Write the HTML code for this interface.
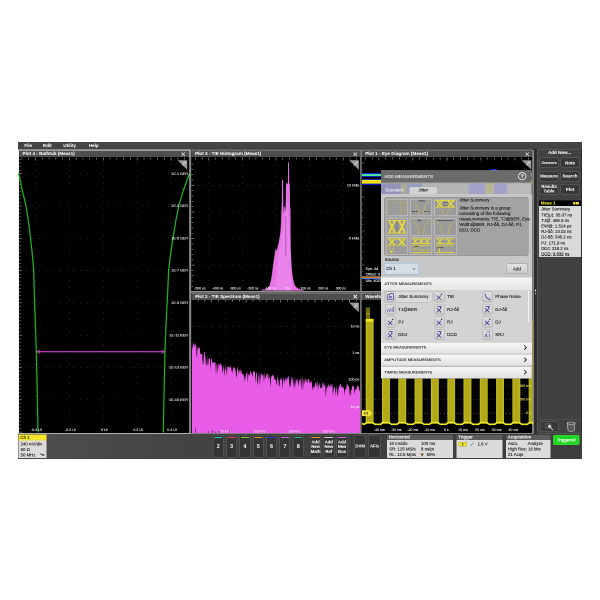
<!DOCTYPE html>
<html><head><meta charset="utf-8"><title>Scope</title>
<style>
html,body{margin:0;padding:0;background:#fff;}
body{width:600px;height:600px;position:relative;overflow:hidden;font-family:"Liberation Sans",sans-serif;}
.a{position:absolute;box-sizing:border-box;}
.t{position:absolute;white-space:nowrap;line-height:1.16;-webkit-text-stroke:0.08px currentColor;}
svg{overflow:visible}
svg text{font-family:"Liberation Sans",sans-serif;}
#root{position:absolute;left:0;top:0;width:600px;height:600px;zoom:2;transform:scale(0.5);transform-origin:0 0;will-change:transform;}
</style></head><body><div id="root">
<div class="a" style="left:18.00px;top:142.00px;width:564.00px;height:316.60px;background:#3f3f3f;"></div>
<div class="a" style="left:18.00px;top:142.00px;width:564.00px;height:8.00px;background:#444;"></div>
<div class="a" style="left:18.00px;top:149.00px;width:564.00px;height:1.00px;background:#262626;"></div>
<div class="t" style="left:24.20px;top:142.93px;font-size:4.6px;color:#f2f2f2;font-weight:bold;">File</div>
<div class="t" style="left:43.00px;top:142.93px;font-size:4.6px;color:#f2f2f2;font-weight:bold;">Edit</div>
<div class="t" style="left:63.30px;top:142.93px;font-size:4.6px;color:#f2f2f2;font-weight:bold;">Utility</div>
<div class="t" style="left:88.70px;top:142.93px;font-size:4.6px;color:#f2f2f2;font-weight:bold;">Help</div>
<div class="a" style="left:18.00px;top:149.60px;width:172.40px;height:284.40px;background:#000;border:1.2px solid #ececec;"></div>
<div class="a" style="left:19.00px;top:150.60px;width:170.40px;height:6.40px;background:#4e4e4e;"></div>
<div class="t" style="left:22.50px;top:151.13px;font-size:4.6px;color:#f4f4f4;font-weight:bold;">Plot 4 - Bathtub (Meas1)</div>
<div class="a" style="left:190.60px;top:149.60px;width:170.40px;height:142.40px;background:#000;border-top:1px solid #8c8c8c;border-bottom:1px solid #8c8c8c;border-left:1px solid #2a2a2a;border-right:1px solid #2a2a2a;"></div>
<div class="a" style="left:191.60px;top:150.60px;width:168.40px;height:6.40px;background:#4e4e4e;"></div>
<div class="t" style="left:195.10px;top:151.13px;font-size:4.6px;color:#f4f4f4;font-weight:bold;">Plot 3 - TIE Histogram (Meas1)</div>
<div class="a" style="left:190.60px;top:292.40px;width:170.40px;height:141.60px;background:#000;border-top:1px solid #8c8c8c;border-bottom:1px solid #8c8c8c;border-left:1px solid #2a2a2a;border-right:1px solid #2a2a2a;"></div>
<div class="a" style="left:191.60px;top:293.40px;width:168.40px;height:6.40px;background:#4e4e4e;"></div>
<div class="t" style="left:195.10px;top:293.93px;font-size:4.6px;color:#f4f4f4;font-weight:bold;">Plot 2 - TIE Spectrum (Meas1)</div>
<div class="a" style="left:360.70px;top:149.60px;width:172.20px;height:142.40px;background:#000;border-top:1px solid #8c8c8c;border-bottom:1px solid #8c8c8c;border-left:1px solid #a8a8a8;border-right:1px solid #777;"></div>
<div class="a" style="left:361.70px;top:150.60px;width:170.20px;height:6.40px;background:#4e4e4e;"></div>
<div class="t" style="left:365.20px;top:151.13px;font-size:4.6px;color:#f4f4f4;font-weight:bold;">Plot 1 - Eye Diagram (Meas1)</div>
<div class="a" style="left:360.70px;top:292.40px;width:172.20px;height:141.60px;background:#000;border-top:1px solid #8c8c8c;border-bottom:1px solid #8c8c8c;border-left:1px solid #a8a8a8;border-right:1px solid #777;"></div>
<div class="a" style="left:361.70px;top:293.40px;width:170.20px;height:6.40px;background:#4e4e4e;"></div>
<div class="t" style="left:365.20px;top:293.93px;font-size:4.6px;color:#f4f4f4;font-weight:bold;">Wavefo</div>
<svg class="a" style="left:0;top:0" width="600" height="600" viewBox="0 0 600 600">
<line x1="35.50" y1="157.5" x2="35.50" y2="433" stroke="#505050" stroke-width="0.7" stroke-dasharray="0.7 5.75"/>
<line x1="69.40" y1="157.5" x2="69.40" y2="433" stroke="#505050" stroke-width="0.7" stroke-dasharray="0.7 5.75"/>
<line x1="103.30" y1="157.5" x2="103.30" y2="433" stroke="#505050" stroke-width="0.7" stroke-dasharray="0.7 5.75"/>
<line x1="137.20" y1="157.5" x2="137.20" y2="433" stroke="#505050" stroke-width="0.7" stroke-dasharray="0.7 5.75"/>
<line x1="171.10" y1="157.5" x2="171.10" y2="433" stroke="#505050" stroke-width="0.7" stroke-dasharray="0.7 5.75"/>
<line x1="19" y1="173.70" x2="189" y2="173.70" stroke="#505050" stroke-width="0.7" stroke-dasharray="0.7 6.08"/>
<line x1="19" y1="206.00" x2="189" y2="206.00" stroke="#505050" stroke-width="0.7" stroke-dasharray="0.7 6.08"/>
<line x1="19" y1="238.30" x2="189" y2="238.30" stroke="#505050" stroke-width="0.7" stroke-dasharray="0.7 6.08"/>
<line x1="19" y1="270.60" x2="189" y2="270.60" stroke="#505050" stroke-width="0.7" stroke-dasharray="0.7 6.08"/>
<line x1="19" y1="302.90" x2="189" y2="302.90" stroke="#505050" stroke-width="0.7" stroke-dasharray="0.7 6.08"/>
<line x1="19" y1="335.20" x2="189" y2="335.20" stroke="#505050" stroke-width="0.7" stroke-dasharray="0.7 6.08"/>
<line x1="19" y1="367.50" x2="189" y2="367.50" stroke="#505050" stroke-width="0.7" stroke-dasharray="0.7 6.08"/>
<line x1="19" y1="399.80" x2="189" y2="399.80" stroke="#505050" stroke-width="0.7" stroke-dasharray="0.7 6.08"/>
<line x1="21.94" y1="157.5" x2="21.94" y2="159.5" stroke="#a8a8a8" stroke-width="0.6"/>
<line x1="28.72" y1="157.5" x2="28.72" y2="159.5" stroke="#a8a8a8" stroke-width="0.6"/>
<line x1="35.50" y1="157.5" x2="35.50" y2="160.5" stroke="#a8a8a8" stroke-width="0.6"/>
<line x1="42.28" y1="157.5" x2="42.28" y2="159.5" stroke="#a8a8a8" stroke-width="0.6"/>
<line x1="49.06" y1="157.5" x2="49.06" y2="159.5" stroke="#a8a8a8" stroke-width="0.6"/>
<line x1="55.84" y1="157.5" x2="55.84" y2="159.5" stroke="#a8a8a8" stroke-width="0.6"/>
<line x1="62.62" y1="157.5" x2="62.62" y2="159.5" stroke="#a8a8a8" stroke-width="0.6"/>
<line x1="69.40" y1="157.5" x2="69.40" y2="160.5" stroke="#a8a8a8" stroke-width="0.6"/>
<line x1="76.18" y1="157.5" x2="76.18" y2="159.5" stroke="#a8a8a8" stroke-width="0.6"/>
<line x1="82.96" y1="157.5" x2="82.96" y2="159.5" stroke="#a8a8a8" stroke-width="0.6"/>
<line x1="89.74" y1="157.5" x2="89.74" y2="159.5" stroke="#a8a8a8" stroke-width="0.6"/>
<line x1="96.52" y1="157.5" x2="96.52" y2="159.5" stroke="#a8a8a8" stroke-width="0.6"/>
<line x1="103.30" y1="157.5" x2="103.30" y2="160.5" stroke="#a8a8a8" stroke-width="0.6"/>
<line x1="110.08" y1="157.5" x2="110.08" y2="159.5" stroke="#a8a8a8" stroke-width="0.6"/>
<line x1="116.86" y1="157.5" x2="116.86" y2="159.5" stroke="#a8a8a8" stroke-width="0.6"/>
<line x1="123.64" y1="157.5" x2="123.64" y2="159.5" stroke="#a8a8a8" stroke-width="0.6"/>
<line x1="130.42" y1="157.5" x2="130.42" y2="159.5" stroke="#a8a8a8" stroke-width="0.6"/>
<line x1="137.20" y1="157.5" x2="137.20" y2="160.5" stroke="#a8a8a8" stroke-width="0.6"/>
<line x1="143.98" y1="157.5" x2="143.98" y2="159.5" stroke="#a8a8a8" stroke-width="0.6"/>
<line x1="150.76" y1="157.5" x2="150.76" y2="159.5" stroke="#a8a8a8" stroke-width="0.6"/>
<line x1="157.54" y1="157.5" x2="157.54" y2="159.5" stroke="#a8a8a8" stroke-width="0.6"/>
<line x1="164.32" y1="157.5" x2="164.32" y2="159.5" stroke="#a8a8a8" stroke-width="0.6"/>
<line x1="171.10" y1="157.5" x2="171.10" y2="160.5" stroke="#a8a8a8" stroke-width="0.6"/>
<line x1="177.88" y1="157.5" x2="177.88" y2="159.5" stroke="#a8a8a8" stroke-width="0.6"/>
<line x1="184.66" y1="157.5" x2="184.66" y2="159.5" stroke="#a8a8a8" stroke-width="0.6"/>
<line x1="19.2" y1="159.34" x2="20.8" y2="159.34" stroke="#a8a8a8" stroke-width="0.55"/>
<line x1="19.2" y1="162.93" x2="20.8" y2="162.93" stroke="#a8a8a8" stroke-width="0.55"/>
<line x1="19.2" y1="166.52" x2="20.8" y2="166.52" stroke="#a8a8a8" stroke-width="0.55"/>
<line x1="19.2" y1="170.11" x2="20.8" y2="170.11" stroke="#a8a8a8" stroke-width="0.55"/>
<line x1="19.2" y1="173.70" x2="22.2" y2="173.70" stroke="#a8a8a8" stroke-width="0.55"/>
<line x1="19.2" y1="177.29" x2="20.8" y2="177.29" stroke="#a8a8a8" stroke-width="0.55"/>
<line x1="19.2" y1="180.88" x2="20.8" y2="180.88" stroke="#a8a8a8" stroke-width="0.55"/>
<line x1="19.2" y1="184.47" x2="20.8" y2="184.47" stroke="#a8a8a8" stroke-width="0.55"/>
<line x1="19.2" y1="188.06" x2="20.8" y2="188.06" stroke="#a8a8a8" stroke-width="0.55"/>
<line x1="19.2" y1="191.64" x2="20.8" y2="191.64" stroke="#a8a8a8" stroke-width="0.55"/>
<line x1="19.2" y1="195.23" x2="20.8" y2="195.23" stroke="#a8a8a8" stroke-width="0.55"/>
<line x1="19.2" y1="198.82" x2="20.8" y2="198.82" stroke="#a8a8a8" stroke-width="0.55"/>
<line x1="19.2" y1="202.41" x2="20.8" y2="202.41" stroke="#a8a8a8" stroke-width="0.55"/>
<line x1="19.2" y1="206.00" x2="22.2" y2="206.00" stroke="#a8a8a8" stroke-width="0.55"/>
<line x1="19.2" y1="209.59" x2="20.8" y2="209.59" stroke="#a8a8a8" stroke-width="0.55"/>
<line x1="19.2" y1="213.18" x2="20.8" y2="213.18" stroke="#a8a8a8" stroke-width="0.55"/>
<line x1="19.2" y1="216.77" x2="20.8" y2="216.77" stroke="#a8a8a8" stroke-width="0.55"/>
<line x1="19.2" y1="220.36" x2="20.8" y2="220.36" stroke="#a8a8a8" stroke-width="0.55"/>
<line x1="19.2" y1="223.94" x2="20.8" y2="223.94" stroke="#a8a8a8" stroke-width="0.55"/>
<line x1="19.2" y1="227.53" x2="20.8" y2="227.53" stroke="#a8a8a8" stroke-width="0.55"/>
<line x1="19.2" y1="231.12" x2="20.8" y2="231.12" stroke="#a8a8a8" stroke-width="0.55"/>
<line x1="19.2" y1="234.71" x2="20.8" y2="234.71" stroke="#a8a8a8" stroke-width="0.55"/>
<line x1="19.2" y1="238.30" x2="22.2" y2="238.30" stroke="#a8a8a8" stroke-width="0.55"/>
<line x1="19.2" y1="241.89" x2="20.8" y2="241.89" stroke="#a8a8a8" stroke-width="0.55"/>
<line x1="19.2" y1="245.48" x2="20.8" y2="245.48" stroke="#a8a8a8" stroke-width="0.55"/>
<line x1="19.2" y1="249.07" x2="20.8" y2="249.07" stroke="#a8a8a8" stroke-width="0.55"/>
<line x1="19.2" y1="252.66" x2="20.8" y2="252.66" stroke="#a8a8a8" stroke-width="0.55"/>
<line x1="19.2" y1="256.24" x2="20.8" y2="256.24" stroke="#a8a8a8" stroke-width="0.55"/>
<line x1="19.2" y1="259.83" x2="20.8" y2="259.83" stroke="#a8a8a8" stroke-width="0.55"/>
<line x1="19.2" y1="263.42" x2="20.8" y2="263.42" stroke="#a8a8a8" stroke-width="0.55"/>
<line x1="19.2" y1="267.01" x2="20.8" y2="267.01" stroke="#a8a8a8" stroke-width="0.55"/>
<line x1="19.2" y1="270.60" x2="22.2" y2="270.60" stroke="#a8a8a8" stroke-width="0.55"/>
<line x1="19.2" y1="274.19" x2="20.8" y2="274.19" stroke="#a8a8a8" stroke-width="0.55"/>
<line x1="19.2" y1="277.78" x2="20.8" y2="277.78" stroke="#a8a8a8" stroke-width="0.55"/>
<line x1="19.2" y1="281.37" x2="20.8" y2="281.37" stroke="#a8a8a8" stroke-width="0.55"/>
<line x1="19.2" y1="284.96" x2="20.8" y2="284.96" stroke="#a8a8a8" stroke-width="0.55"/>
<line x1="19.2" y1="288.54" x2="20.8" y2="288.54" stroke="#a8a8a8" stroke-width="0.55"/>
<line x1="19.2" y1="292.13" x2="20.8" y2="292.13" stroke="#a8a8a8" stroke-width="0.55"/>
<line x1="19.2" y1="295.72" x2="20.8" y2="295.72" stroke="#a8a8a8" stroke-width="0.55"/>
<line x1="19.2" y1="299.31" x2="20.8" y2="299.31" stroke="#a8a8a8" stroke-width="0.55"/>
<line x1="19.2" y1="302.90" x2="22.2" y2="302.90" stroke="#a8a8a8" stroke-width="0.55"/>
<line x1="19.2" y1="306.49" x2="20.8" y2="306.49" stroke="#a8a8a8" stroke-width="0.55"/>
<line x1="19.2" y1="310.08" x2="20.8" y2="310.08" stroke="#a8a8a8" stroke-width="0.55"/>
<line x1="19.2" y1="313.67" x2="20.8" y2="313.67" stroke="#a8a8a8" stroke-width="0.55"/>
<line x1="19.2" y1="317.26" x2="20.8" y2="317.26" stroke="#a8a8a8" stroke-width="0.55"/>
<line x1="19.2" y1="320.84" x2="20.8" y2="320.84" stroke="#a8a8a8" stroke-width="0.55"/>
<line x1="19.2" y1="324.43" x2="20.8" y2="324.43" stroke="#a8a8a8" stroke-width="0.55"/>
<line x1="19.2" y1="328.02" x2="20.8" y2="328.02" stroke="#a8a8a8" stroke-width="0.55"/>
<line x1="19.2" y1="331.61" x2="20.8" y2="331.61" stroke="#a8a8a8" stroke-width="0.55"/>
<line x1="19.2" y1="335.20" x2="22.2" y2="335.20" stroke="#a8a8a8" stroke-width="0.55"/>
<line x1="19.2" y1="338.79" x2="20.8" y2="338.79" stroke="#a8a8a8" stroke-width="0.55"/>
<line x1="19.2" y1="342.38" x2="20.8" y2="342.38" stroke="#a8a8a8" stroke-width="0.55"/>
<line x1="19.2" y1="345.97" x2="20.8" y2="345.97" stroke="#a8a8a8" stroke-width="0.55"/>
<line x1="19.2" y1="349.56" x2="20.8" y2="349.56" stroke="#a8a8a8" stroke-width="0.55"/>
<line x1="19.2" y1="353.14" x2="20.8" y2="353.14" stroke="#a8a8a8" stroke-width="0.55"/>
<line x1="19.2" y1="356.73" x2="20.8" y2="356.73" stroke="#a8a8a8" stroke-width="0.55"/>
<line x1="19.2" y1="360.32" x2="20.8" y2="360.32" stroke="#a8a8a8" stroke-width="0.55"/>
<line x1="19.2" y1="363.91" x2="20.8" y2="363.91" stroke="#a8a8a8" stroke-width="0.55"/>
<line x1="19.2" y1="367.50" x2="22.2" y2="367.50" stroke="#a8a8a8" stroke-width="0.55"/>
<line x1="19.2" y1="371.09" x2="20.8" y2="371.09" stroke="#a8a8a8" stroke-width="0.55"/>
<line x1="19.2" y1="374.68" x2="20.8" y2="374.68" stroke="#a8a8a8" stroke-width="0.55"/>
<line x1="19.2" y1="378.27" x2="20.8" y2="378.27" stroke="#a8a8a8" stroke-width="0.55"/>
<line x1="19.2" y1="381.86" x2="20.8" y2="381.86" stroke="#a8a8a8" stroke-width="0.55"/>
<line x1="19.2" y1="385.44" x2="20.8" y2="385.44" stroke="#a8a8a8" stroke-width="0.55"/>
<line x1="19.2" y1="389.03" x2="20.8" y2="389.03" stroke="#a8a8a8" stroke-width="0.55"/>
<line x1="19.2" y1="392.62" x2="20.8" y2="392.62" stroke="#a8a8a8" stroke-width="0.55"/>
<line x1="19.2" y1="396.21" x2="20.8" y2="396.21" stroke="#a8a8a8" stroke-width="0.55"/>
<line x1="19.2" y1="399.80" x2="22.2" y2="399.80" stroke="#a8a8a8" stroke-width="0.55"/>
<line x1="19.2" y1="403.39" x2="20.8" y2="403.39" stroke="#a8a8a8" stroke-width="0.55"/>
<line x1="19.2" y1="406.98" x2="20.8" y2="406.98" stroke="#a8a8a8" stroke-width="0.55"/>
<line x1="19.2" y1="410.57" x2="20.8" y2="410.57" stroke="#a8a8a8" stroke-width="0.55"/>
<line x1="19.2" y1="414.16" x2="20.8" y2="414.16" stroke="#a8a8a8" stroke-width="0.55"/>
<line x1="19.2" y1="417.74" x2="20.8" y2="417.74" stroke="#a8a8a8" stroke-width="0.55"/>
<line x1="19.2" y1="421.33" x2="20.8" y2="421.33" stroke="#a8a8a8" stroke-width="0.55"/>
<line x1="19.2" y1="424.92" x2="20.8" y2="424.92" stroke="#a8a8a8" stroke-width="0.55"/>
<line x1="19.2" y1="428.51" x2="20.8" y2="428.51" stroke="#a8a8a8" stroke-width="0.55"/>
<line x1="19.2" y1="432.10" x2="22.2" y2="432.10" stroke="#a8a8a8" stroke-width="0.55"/>
<polyline points="18.6,173 22,189 26,206 28.5,222 30.5,237.5 32.3,254 33.7,270 34.5,300 35.4,325 36.3,351 37.2,390 38,432.5" fill="none" stroke="#1fb41f" stroke-width="1.25" stroke-linejoin="round"/>
<polyline points="189.2,174 183.5,190 178.7,206 175.6,222 173,238 170.6,254 168.7,270 167.3,300 166,325 165,351 164.1,390 163.3,432.5" fill="none" stroke="#1fb41f" stroke-width="1.25" stroke-linejoin="round"/>
<path d="M37,351.7L164.6,351.7" stroke="#b235b2" stroke-width="1.3"/>
<path d="M40.3,349.7L37,351.7L40.3,353.7M161.3,349.7L164.6,351.7L161.3,353.7" stroke="#c050c0" stroke-width="0.7" fill="none"/>
<path d="M181.60000000000002,152.5L185.0,155.89999999999998M185.0,152.5L181.60000000000002,155.89999999999998" stroke="#e8e8e8" stroke-width="0.7" fill="none"/>
<path d="M177.5,160.2L187.2,160.2L187.2,169.79999999999998Z" fill="#9a9a9a"/>
<circle cx="184.89999999999998" cy="162.6" r="1.1" fill="none" stroke="#e0e0e0" stroke-width="0.5"/><path d="M184.1,163.5L182.2,165.6" stroke="#e0e0e0" stroke-width="0.6"/>
<line x1="208.90" y1="157.5" x2="208.90" y2="291" stroke="#505050" stroke-width="0.7" stroke-dasharray="0.7 5.75"/>
<line x1="242.50" y1="157.5" x2="242.50" y2="291" stroke="#505050" stroke-width="0.7" stroke-dasharray="0.7 5.75"/>
<line x1="276.10" y1="157.5" x2="276.10" y2="291" stroke="#505050" stroke-width="0.7" stroke-dasharray="0.7 5.75"/>
<line x1="309.70" y1="157.5" x2="309.70" y2="291" stroke="#505050" stroke-width="0.7" stroke-dasharray="0.7 5.75"/>
<line x1="343.30" y1="157.5" x2="343.30" y2="291" stroke="#505050" stroke-width="0.7" stroke-dasharray="0.7 5.75"/>
<line x1="192" y1="185.50" x2="360" y2="185.50" stroke="#505050" stroke-width="0.7" stroke-dasharray="0.7 6.08"/>
<line x1="192" y1="212.00" x2="360" y2="212.00" stroke="#505050" stroke-width="0.7" stroke-dasharray="0.7 6.08"/>
<line x1="192" y1="238.70" x2="360" y2="238.70" stroke="#505050" stroke-width="0.7" stroke-dasharray="0.7 6.08"/>
<line x1="192" y1="265.00" x2="360" y2="265.00" stroke="#505050" stroke-width="0.7" stroke-dasharray="0.7 6.08"/>
<line x1="195.40" y1="157.5" x2="195.40" y2="159.5" stroke="#a8a8a8" stroke-width="0.6"/>
<line x1="202.12" y1="157.5" x2="202.12" y2="159.5" stroke="#a8a8a8" stroke-width="0.6"/>
<line x1="208.84" y1="157.5" x2="208.84" y2="160.5" stroke="#a8a8a8" stroke-width="0.6"/>
<line x1="215.56" y1="157.5" x2="215.56" y2="159.5" stroke="#a8a8a8" stroke-width="0.6"/>
<line x1="222.28" y1="157.5" x2="222.28" y2="159.5" stroke="#a8a8a8" stroke-width="0.6"/>
<line x1="229.00" y1="157.5" x2="229.00" y2="159.5" stroke="#a8a8a8" stroke-width="0.6"/>
<line x1="235.72" y1="157.5" x2="235.72" y2="159.5" stroke="#a8a8a8" stroke-width="0.6"/>
<line x1="242.44" y1="157.5" x2="242.44" y2="160.5" stroke="#a8a8a8" stroke-width="0.6"/>
<line x1="249.16" y1="157.5" x2="249.16" y2="159.5" stroke="#a8a8a8" stroke-width="0.6"/>
<line x1="255.88" y1="157.5" x2="255.88" y2="159.5" stroke="#a8a8a8" stroke-width="0.6"/>
<line x1="262.60" y1="157.5" x2="262.60" y2="159.5" stroke="#a8a8a8" stroke-width="0.6"/>
<line x1="269.32" y1="157.5" x2="269.32" y2="159.5" stroke="#a8a8a8" stroke-width="0.6"/>
<line x1="276.04" y1="157.5" x2="276.04" y2="160.5" stroke="#a8a8a8" stroke-width="0.6"/>
<line x1="282.76" y1="157.5" x2="282.76" y2="159.5" stroke="#a8a8a8" stroke-width="0.6"/>
<line x1="289.48" y1="157.5" x2="289.48" y2="159.5" stroke="#a8a8a8" stroke-width="0.6"/>
<line x1="296.20" y1="157.5" x2="296.20" y2="159.5" stroke="#a8a8a8" stroke-width="0.6"/>
<line x1="302.92" y1="157.5" x2="302.92" y2="159.5" stroke="#a8a8a8" stroke-width="0.6"/>
<line x1="309.64" y1="157.5" x2="309.64" y2="160.5" stroke="#a8a8a8" stroke-width="0.6"/>
<line x1="316.36" y1="157.5" x2="316.36" y2="159.5" stroke="#a8a8a8" stroke-width="0.6"/>
<line x1="323.08" y1="157.5" x2="323.08" y2="159.5" stroke="#a8a8a8" stroke-width="0.6"/>
<line x1="329.80" y1="157.5" x2="329.80" y2="159.5" stroke="#a8a8a8" stroke-width="0.6"/>
<line x1="336.52" y1="157.5" x2="336.52" y2="159.5" stroke="#a8a8a8" stroke-width="0.6"/>
<line x1="343.24" y1="157.5" x2="343.24" y2="160.5" stroke="#a8a8a8" stroke-width="0.6"/>
<line x1="349.96" y1="157.5" x2="349.96" y2="159.5" stroke="#a8a8a8" stroke-width="0.6"/>
<line x1="356.68" y1="157.5" x2="356.68" y2="159.5" stroke="#a8a8a8" stroke-width="0.6"/>
<line x1="191.6" y1="164.20" x2="193.2" y2="164.20" stroke="#a8a8a8" stroke-width="0.55"/>
<line x1="191.6" y1="169.51" x2="193.2" y2="169.51" stroke="#a8a8a8" stroke-width="0.55"/>
<line x1="191.6" y1="174.82" x2="193.2" y2="174.82" stroke="#a8a8a8" stroke-width="0.55"/>
<line x1="191.6" y1="180.13" x2="193.2" y2="180.13" stroke="#a8a8a8" stroke-width="0.55"/>
<line x1="191.6" y1="185.44" x2="194.6" y2="185.44" stroke="#a8a8a8" stroke-width="0.55"/>
<line x1="191.6" y1="190.75" x2="193.2" y2="190.75" stroke="#a8a8a8" stroke-width="0.55"/>
<line x1="191.6" y1="196.06" x2="193.2" y2="196.06" stroke="#a8a8a8" stroke-width="0.55"/>
<line x1="191.6" y1="201.37" x2="193.2" y2="201.37" stroke="#a8a8a8" stroke-width="0.55"/>
<line x1="191.6" y1="206.68" x2="193.2" y2="206.68" stroke="#a8a8a8" stroke-width="0.55"/>
<line x1="191.6" y1="211.99" x2="194.6" y2="211.99" stroke="#a8a8a8" stroke-width="0.55"/>
<line x1="191.6" y1="217.30" x2="193.2" y2="217.30" stroke="#a8a8a8" stroke-width="0.55"/>
<line x1="191.6" y1="222.61" x2="193.2" y2="222.61" stroke="#a8a8a8" stroke-width="0.55"/>
<line x1="191.6" y1="227.92" x2="193.2" y2="227.92" stroke="#a8a8a8" stroke-width="0.55"/>
<line x1="191.6" y1="233.23" x2="193.2" y2="233.23" stroke="#a8a8a8" stroke-width="0.55"/>
<line x1="191.6" y1="238.54" x2="194.6" y2="238.54" stroke="#a8a8a8" stroke-width="0.55"/>
<line x1="191.6" y1="243.85" x2="193.2" y2="243.85" stroke="#a8a8a8" stroke-width="0.55"/>
<line x1="191.6" y1="249.16" x2="193.2" y2="249.16" stroke="#a8a8a8" stroke-width="0.55"/>
<line x1="191.6" y1="254.47" x2="193.2" y2="254.47" stroke="#a8a8a8" stroke-width="0.55"/>
<line x1="191.6" y1="259.78" x2="193.2" y2="259.78" stroke="#a8a8a8" stroke-width="0.55"/>
<line x1="191.6" y1="265.09" x2="194.6" y2="265.09" stroke="#a8a8a8" stroke-width="0.55"/>
<line x1="191.6" y1="270.40" x2="193.2" y2="270.40" stroke="#a8a8a8" stroke-width="0.55"/>
<line x1="191.6" y1="275.71" x2="193.2" y2="275.71" stroke="#a8a8a8" stroke-width="0.55"/>
<line x1="191.6" y1="281.02" x2="193.2" y2="281.02" stroke="#a8a8a8" stroke-width="0.55"/>
<line x1="191.6" y1="286.33" x2="193.2" y2="286.33" stroke="#a8a8a8" stroke-width="0.55"/>
<defs><linearGradient id="hg" x1="0" x2="1" y1="0" y2="0"><stop offset="0" stop-color="#d95ad9"/><stop offset="0.5" stop-color="#ee8cee"/><stop offset="1" stop-color="#d95ad9"/></linearGradient></defs>
<polygon points="260.5,290.6 262.5,289.8 263.2,289 264,289.9 265.5,289.2 266.2,288 267,289 268,287.6 269.5,285.5 271,280 272,274 273,266 274,259 275,252 275.7,248.3 276.6,251 277.6,247 278.6,243 279.6,237.5 280.4,232 281,224 281.4,212 281.8,202 282.1,180 283.1,180 283.3,205 283.8,214 284.2,206.5 284.9,206.5 285.3,214 285.8,200 286,184.5 286.6,182 287.2,184.5 287.9,183 288.1,162.2 289,162.2 289.2,183 289.8,184 290,205 290.5,210 290.7,248 291.7,268 292.6,276 293.7,281.7 294.6,284.5 295.2,286.5 296,286 296.8,288.2 297.6,287.4 298.4,289 299.4,288.4 300.2,289.8 302,289.6 304.5,290.6" fill="#e672e6"/>
<polygon points="275,290.6 278,262 281,240 284,222 287,200 290,240 291.5,290.6" fill="#f0a0f0" opacity="0.4"/>
<path d="M285.9,216L285.9,256" stroke="#7a2a7a" stroke-width="0.5"/>
<path d="M353.6,152.5L357.0,155.89999999999998M357.0,152.5L353.6,155.89999999999998" stroke="#e8e8e8" stroke-width="0.7" fill="none"/>
<path d="M349.1,160.2L358.8,160.2L358.8,169.79999999999998Z" fill="#9a9a9a"/>
<circle cx="356.5" cy="162.6" r="1.1" fill="none" stroke="#e0e0e0" stroke-width="0.5"/><path d="M355.7,163.5L353.8,165.6" stroke="#e0e0e0" stroke-width="0.6"/>
<line x1="225.50" y1="300" x2="225.50" y2="433" stroke="#505050" stroke-width="0.7" stroke-dasharray="0.7 5.75"/>
<line x1="259.90" y1="300" x2="259.90" y2="433" stroke="#505050" stroke-width="0.7" stroke-dasharray="0.7 5.75"/>
<line x1="294.30" y1="300" x2="294.30" y2="433" stroke="#505050" stroke-width="0.7" stroke-dasharray="0.7 5.75"/>
<line x1="328.70" y1="300" x2="328.70" y2="433" stroke="#505050" stroke-width="0.7" stroke-dasharray="0.7 5.75"/>
<line x1="192" y1="326.40" x2="360" y2="326.40" stroke="#505050" stroke-width="0.7" stroke-dasharray="0.7 6.08"/>
<line x1="192" y1="353.00" x2="360" y2="353.00" stroke="#505050" stroke-width="0.7" stroke-dasharray="0.7 6.08"/>
<line x1="192" y1="379.60" x2="360" y2="379.60" stroke="#505050" stroke-width="0.7" stroke-dasharray="0.7 6.08"/>
<line x1="192" y1="407.00" x2="360" y2="407.00" stroke="#505050" stroke-width="0.7" stroke-dasharray="0.7 6.08"/>
<line x1="198.00" y1="299.6" x2="198.00" y2="301.6" stroke="#a8a8a8" stroke-width="0.6"/>
<line x1="204.88" y1="299.6" x2="204.88" y2="301.6" stroke="#a8a8a8" stroke-width="0.6"/>
<line x1="211.76" y1="299.6" x2="211.76" y2="302.6" stroke="#a8a8a8" stroke-width="0.6"/>
<line x1="218.64" y1="299.6" x2="218.64" y2="301.6" stroke="#a8a8a8" stroke-width="0.6"/>
<line x1="225.52" y1="299.6" x2="225.52" y2="301.6" stroke="#a8a8a8" stroke-width="0.6"/>
<line x1="232.40" y1="299.6" x2="232.40" y2="301.6" stroke="#a8a8a8" stroke-width="0.6"/>
<line x1="239.28" y1="299.6" x2="239.28" y2="301.6" stroke="#a8a8a8" stroke-width="0.6"/>
<line x1="246.16" y1="299.6" x2="246.16" y2="302.6" stroke="#a8a8a8" stroke-width="0.6"/>
<line x1="253.04" y1="299.6" x2="253.04" y2="301.6" stroke="#a8a8a8" stroke-width="0.6"/>
<line x1="259.92" y1="299.6" x2="259.92" y2="301.6" stroke="#a8a8a8" stroke-width="0.6"/>
<line x1="266.80" y1="299.6" x2="266.80" y2="301.6" stroke="#a8a8a8" stroke-width="0.6"/>
<line x1="273.68" y1="299.6" x2="273.68" y2="301.6" stroke="#a8a8a8" stroke-width="0.6"/>
<line x1="280.56" y1="299.6" x2="280.56" y2="302.6" stroke="#a8a8a8" stroke-width="0.6"/>
<line x1="287.44" y1="299.6" x2="287.44" y2="301.6" stroke="#a8a8a8" stroke-width="0.6"/>
<line x1="294.32" y1="299.6" x2="294.32" y2="301.6" stroke="#a8a8a8" stroke-width="0.6"/>
<line x1="301.20" y1="299.6" x2="301.20" y2="301.6" stroke="#a8a8a8" stroke-width="0.6"/>
<line x1="308.08" y1="299.6" x2="308.08" y2="301.6" stroke="#a8a8a8" stroke-width="0.6"/>
<line x1="314.96" y1="299.6" x2="314.96" y2="302.6" stroke="#a8a8a8" stroke-width="0.6"/>
<line x1="321.84" y1="299.6" x2="321.84" y2="301.6" stroke="#a8a8a8" stroke-width="0.6"/>
<line x1="328.72" y1="299.6" x2="328.72" y2="301.6" stroke="#a8a8a8" stroke-width="0.6"/>
<line x1="335.60" y1="299.6" x2="335.60" y2="301.6" stroke="#a8a8a8" stroke-width="0.6"/>
<line x1="342.48" y1="299.6" x2="342.48" y2="301.6" stroke="#a8a8a8" stroke-width="0.6"/>
<line x1="349.36" y1="299.6" x2="349.36" y2="302.6" stroke="#a8a8a8" stroke-width="0.6"/>
<line x1="356.24" y1="299.6" x2="356.24" y2="301.6" stroke="#a8a8a8" stroke-width="0.6"/>
<polygon points="192.00,433.00 192.00,343.18 192.60,349.34 193.20,344.86 193.80,341.97 194.40,347.42 195.00,342.98 195.60,345.01 196.20,345.92 196.80,359.02 197.40,350.05 198.00,345.64 198.60,348.53 199.20,347.46 199.80,348.65 200.40,354.27 201.00,353.81 201.60,354.46 202.20,353.09 202.80,365.20 203.40,363.15 204.00,351.90 204.60,352.05 205.20,356.42 205.80,362.44 206.40,367.13 207.00,354.57 207.60,364.82 208.20,364.73 208.80,357.29 209.40,359.62 210.00,357.66 210.60,370.22 211.20,358.57 211.80,358.66 212.40,361.96 213.00,363.87 213.60,362.02 214.20,362.36 214.80,362.37 215.40,362.27 216.00,374.97 216.60,364.09 217.20,363.01 217.80,373.94 218.40,364.78 219.00,363.10 219.60,366.24 220.20,362.92 220.80,364.34 221.40,364.53 222.00,367.43 222.60,373.66 223.20,369.79 223.80,363.98 224.40,377.10 225.00,364.36 225.60,370.73 226.20,366.54 226.80,375.74 227.40,366.96 228.00,366.99 228.60,366.48 229.20,366.92 229.80,368.47 230.40,366.94 231.00,365.85 231.60,371.69 232.20,368.96 232.80,373.54 233.40,366.52 234.00,368.29 234.60,367.05 235.20,368.92 235.80,372.86 236.40,378.46 237.00,371.61 237.60,366.91 238.20,369.24 238.80,373.92 239.40,368.83 240.00,373.04 240.60,370.02 241.20,369.03 241.80,374.30 242.40,373.46 243.00,374.66 243.60,373.65 244.20,382.20 244.80,374.46 245.40,379.80 246.00,372.70 246.60,373.97 247.20,370.66 247.80,383.12 248.40,373.29 249.00,374.39 249.60,375.82 250.20,371.64 250.80,371.41 251.40,373.19 252.00,374.67 252.60,376.93 253.20,370.49 253.80,372.30 254.40,371.17 255.00,382.82 255.60,377.47 256.20,372.76 256.80,372.26 257.40,385.50 258.00,380.82 258.60,375.03 259.20,372.77 259.80,385.25 260.40,378.45 261.00,372.21 261.60,375.25 262.20,372.99 262.80,376.51 263.40,374.23 264.00,382.29 264.60,372.38 265.20,378.76 265.80,377.32 266.40,374.54 267.00,372.98 267.60,374.85 268.20,380.95 268.80,373.02 269.40,377.22 270.00,378.35 270.60,387.78 271.20,376.24 271.80,376.22 272.40,374.59 273.00,376.40 273.60,374.45 274.20,378.27 274.80,379.54 275.40,379.80 276.00,380.71 276.60,386.51 277.20,375.20 277.80,380.68 278.40,379.03 279.00,387.42 279.60,384.48 280.20,377.39 280.80,380.51 281.40,380.07 282.00,376.79 282.60,389.39 283.20,380.61 283.80,376.99 284.40,383.91 285.00,375.94 285.60,380.73 286.20,377.09 286.80,381.59 287.40,377.93 288.00,377.10 288.60,375.56 289.20,380.86 289.80,387.51 290.40,385.80 291.00,382.20 291.60,376.80 292.20,377.36 292.80,380.21 293.40,386.70 294.00,376.67 294.60,389.88 295.20,377.96 295.80,386.61 296.40,378.96 297.00,380.53 297.60,378.21 298.20,386.77 298.80,382.19 299.40,380.70 300.00,378.63 300.60,380.43 301.20,390.73 301.80,377.66 302.40,377.69 303.00,390.87 303.60,380.50 304.20,378.62 304.80,384.40 305.40,379.50 306.00,378.11 306.60,381.31 307.20,382.96 307.80,379.84 308.40,379.45 309.00,378.82 309.60,382.67 310.20,382.71 310.80,381.59 311.40,380.53 312.00,383.76 312.60,390.77 313.20,387.52 313.80,385.63 314.40,388.58 315.00,382.20 315.60,382.54 316.20,387.41 316.80,382.18 317.40,380.76 318.00,390.47 318.60,383.46 319.20,386.41 319.80,381.65 320.40,387.86 321.00,388.50 321.60,387.40 322.20,387.20 322.80,382.10 323.40,382.18 324.00,386.81 324.60,385.13 325.20,383.02 325.80,397.45 326.40,389.42 327.00,384.96 327.60,388.43 328.20,383.80 328.80,386.81 329.40,384.75 330.00,388.93 330.60,383.87 331.20,386.78 331.80,383.20 332.40,384.89 333.00,396.05 333.60,389.16 334.20,386.91 334.80,387.43 335.40,396.18 336.00,385.24 336.60,388.87 337.20,392.66 337.80,396.95 338.40,388.89 339.00,387.11 339.60,385.46 340.20,384.31 340.80,384.05 341.40,388.30 342.00,385.57 342.60,386.92 343.20,388.11 343.80,387.23 344.40,395.09 345.00,389.14 345.60,389.56 346.20,389.08 346.80,384.41 347.40,383.92 348.00,385.95 348.60,385.75 349.20,388.08 349.80,394.78 350.40,395.53 351.00,390.60 351.60,389.84 352.20,386.49 352.80,385.47 353.40,385.66 354.00,386.83 354.60,394.45 355.20,389.78 355.80,388.35 356.40,389.84 357.00,386.96 357.60,385.33 358.20,385.52 358.80,387.43 359.40,392.15 360.00,388.04 360.20,433.00" fill="#e85ce8"/>
<line x1="229.58" y1="433" x2="229.58" y2="430.11" stroke="#4a104a" stroke-width="0.5"/>
<line x1="195.72" y1="433" x2="195.72" y2="427.38" stroke="#4a104a" stroke-width="0.5"/>
<line x1="208.89" y1="433" x2="208.89" y2="431.04" stroke="#4a104a" stroke-width="0.5"/>
<line x1="229.01" y1="433" x2="229.01" y2="431.51" stroke="#4a104a" stroke-width="0.5"/>
<line x1="212.36" y1="433" x2="212.36" y2="430.13" stroke="#4a104a" stroke-width="0.5"/>
<line x1="219.74" y1="433" x2="219.74" y2="431.06" stroke="#4a104a" stroke-width="0.5"/>
<line x1="229.22" y1="433" x2="229.22" y2="430.37" stroke="#4a104a" stroke-width="0.5"/>
<line x1="215.33" y1="433" x2="215.33" y2="431.77" stroke="#4a104a" stroke-width="0.5"/>
<path d="M353.6,294.90000000000003L357.0,298.3M357.0,294.90000000000003L353.6,298.3" stroke="#e8e8e8" stroke-width="0.7" fill="none"/>
<path d="M349.1,302.6L358.8,302.6L358.8,312.20000000000005Z" fill="#9a9a9a"/>
<circle cx="356.5" cy="305.0" r="1.1" fill="none" stroke="#e0e0e0" stroke-width="0.5"/><path d="M355.7,305.90000000000003L353.8,308.0" stroke="#e0e0e0" stroke-width="0.6"/>
</svg>
<div class="t" style="right:412.00px;top:171.80px;font-size:3.8px;color:#f0f0f0;font-weight:normal;">1E-1 BER</div>
<div class="t" style="right:412.00px;top:204.10px;font-size:3.8px;color:#f0f0f0;font-weight:normal;">1E-3 BER</div>
<div class="t" style="right:412.00px;top:236.40px;font-size:3.8px;color:#f0f0f0;font-weight:normal;">1E-5 BER</div>
<div class="t" style="right:412.00px;top:268.70px;font-size:3.8px;color:#f0f0f0;font-weight:normal;">1E-7 BER</div>
<div class="t" style="right:412.00px;top:301.00px;font-size:3.8px;color:#f0f0f0;font-weight:normal;">1E-9 BER</div>
<div class="t" style="right:412.00px;top:333.30px;font-size:3.8px;color:#f0f0f0;font-weight:normal;">1E-11 BER</div>
<div class="t" style="right:412.00px;top:365.60px;font-size:3.8px;color:#f0f0f0;font-weight:normal;">1E-13 BER</div>
<div class="t" style="right:412.00px;top:397.90px;font-size:3.8px;color:#f0f0f0;font-weight:normal;">1E-15 BER</div>
<div class="t" style="left:-63.50px;width:200px;text-align:center;top:428.21px;font-size:3.6px;color:#f0f0f0;font-weight:normal;">-0.4 UI</div>
<div class="t" style="left:-29.60px;width:200px;text-align:center;top:428.21px;font-size:3.6px;color:#f0f0f0;font-weight:normal;">-0.2 UI</div>
<div class="t" style="left:4.30px;width:200px;text-align:center;top:428.21px;font-size:3.6px;color:#f0f0f0;font-weight:normal;">0 UI</div>
<div class="t" style="left:38.20px;width:200px;text-align:center;top:428.21px;font-size:3.6px;color:#f0f0f0;font-weight:normal;">0.2 UI</div>
<div class="t" style="left:72.10px;width:200px;text-align:center;top:428.21px;font-size:3.6px;color:#f0f0f0;font-weight:normal;">0.4 UI</div>
<div class="t" style="right:240.70px;top:183.41px;font-size:3.6px;color:#f0f0f0;font-weight:normal;">10 khits</div>
<div class="t" style="right:240.70px;top:236.61px;font-size:3.6px;color:#f0f0f0;font-weight:normal;">5 khits</div>
<div class="t" style="left:100.00px;width:200px;text-align:center;top:286.63px;font-size:3.4px;color:#f0f0f0;font-weight:normal;">-500 ns</div>
<div class="t" style="left:117.60px;width:200px;text-align:center;top:286.63px;font-size:3.4px;color:#f0f0f0;font-weight:normal;">-400 ns</div>
<div class="t" style="left:135.20px;width:200px;text-align:center;top:286.63px;font-size:3.4px;color:#f0f0f0;font-weight:normal;">-300 ns</div>
<div class="t" style="left:152.80px;width:200px;text-align:center;top:286.63px;font-size:3.4px;color:#f0f0f0;font-weight:normal;">-200 ns</div>
<div class="t" style="left:170.40px;width:200px;text-align:center;top:286.63px;font-size:3.4px;color:#f0f0f0;font-weight:normal;">-100 ns</div>
<div class="t" style="left:188.00px;width:200px;text-align:center;top:286.63px;font-size:3.4px;color:#f0f0f0;font-weight:normal;">0 s</div>
<div class="t" style="left:205.60px;width:200px;text-align:center;top:286.63px;font-size:3.4px;color:#f0f0f0;font-weight:normal;">100 ns</div>
<div class="t" style="left:223.20px;width:200px;text-align:center;top:286.63px;font-size:3.4px;color:#f0f0f0;font-weight:normal;">200 ns</div>
<div class="t" style="left:240.80px;width:200px;text-align:center;top:286.63px;font-size:3.4px;color:#f0f0f0;font-weight:normal;">300 ns</div>
<div class="t" style="right:240.70px;top:324.31px;font-size:3.6px;color:#f0f0f0;font-weight:normal;">10 ns</div>
<div class="t" style="right:240.70px;top:350.91px;font-size:3.6px;color:#f0f0f0;font-weight:normal;">1 ns</div>
<div class="t" style="right:240.70px;top:377.51px;font-size:3.6px;color:#f0f0f0;font-weight:normal;">100 ps</div>
<div class="t" style="right:240.70px;top:404.91px;font-size:3.6px;color:#f0f0f0;font-weight:normal;">10 ps</div>
<div class="t" style="left:125.50px;width:200px;text-align:center;top:429.33px;font-size:3.4px;color:#f3c8f3;font-weight:normal;">50 kHz</div>
<div class="t" style="left:159.90px;width:200px;text-align:center;top:429.33px;font-size:3.4px;color:#f3c8f3;font-weight:normal;">100 kHz</div>
<div class="t" style="left:194.30px;width:200px;text-align:center;top:429.33px;font-size:3.4px;color:#f3c8f3;font-weight:normal;">150 kHz</div>
<div class="t" style="left:228.70px;width:200px;text-align:center;top:429.33px;font-size:3.4px;color:#f3c8f3;font-weight:normal;">200 kHz</div>
<svg class="a" style="left:0;top:0" width="600" height="600" viewBox="0 0 600 600">
<line x1="365.30" y1="157.5" x2="365.30" y2="159.5" stroke="#a8a8a8" stroke-width="0.6"/>
<line x1="372.10" y1="157.5" x2="372.10" y2="159.5" stroke="#a8a8a8" stroke-width="0.6"/>
<line x1="378.90" y1="157.5" x2="378.90" y2="160.5" stroke="#a8a8a8" stroke-width="0.6"/>
<line x1="385.70" y1="157.5" x2="385.70" y2="159.5" stroke="#a8a8a8" stroke-width="0.6"/>
<line x1="392.50" y1="157.5" x2="392.50" y2="159.5" stroke="#a8a8a8" stroke-width="0.6"/>
<line x1="399.30" y1="157.5" x2="399.30" y2="159.5" stroke="#a8a8a8" stroke-width="0.6"/>
<line x1="406.10" y1="157.5" x2="406.10" y2="159.5" stroke="#a8a8a8" stroke-width="0.6"/>
<line x1="412.90" y1="157.5" x2="412.90" y2="160.5" stroke="#a8a8a8" stroke-width="0.6"/>
<line x1="419.70" y1="157.5" x2="419.70" y2="159.5" stroke="#a8a8a8" stroke-width="0.6"/>
<line x1="426.50" y1="157.5" x2="426.50" y2="159.5" stroke="#a8a8a8" stroke-width="0.6"/>
<line x1="433.30" y1="157.5" x2="433.30" y2="159.5" stroke="#a8a8a8" stroke-width="0.6"/>
<line x1="440.10" y1="157.5" x2="440.10" y2="159.5" stroke="#a8a8a8" stroke-width="0.6"/>
<line x1="446.90" y1="157.5" x2="446.90" y2="160.5" stroke="#a8a8a8" stroke-width="0.6"/>
<line x1="453.70" y1="157.5" x2="453.70" y2="159.5" stroke="#a8a8a8" stroke-width="0.6"/>
<line x1="460.50" y1="157.5" x2="460.50" y2="159.5" stroke="#a8a8a8" stroke-width="0.6"/>
<line x1="467.30" y1="157.5" x2="467.30" y2="159.5" stroke="#a8a8a8" stroke-width="0.6"/>
<line x1="474.10" y1="157.5" x2="474.10" y2="159.5" stroke="#a8a8a8" stroke-width="0.6"/>
<line x1="480.90" y1="157.5" x2="480.90" y2="160.5" stroke="#a8a8a8" stroke-width="0.6"/>
<line x1="487.70" y1="157.5" x2="487.70" y2="159.5" stroke="#a8a8a8" stroke-width="0.6"/>
<line x1="494.50" y1="157.5" x2="494.50" y2="159.5" stroke="#a8a8a8" stroke-width="0.6"/>
<line x1="501.30" y1="157.5" x2="501.30" y2="159.5" stroke="#a8a8a8" stroke-width="0.6"/>
<line x1="508.10" y1="157.5" x2="508.10" y2="159.5" stroke="#a8a8a8" stroke-width="0.6"/>
<line x1="514.90" y1="157.5" x2="514.90" y2="160.5" stroke="#a8a8a8" stroke-width="0.6"/>
<line x1="521.70" y1="157.5" x2="521.70" y2="159.5" stroke="#a8a8a8" stroke-width="0.6"/>
<line x1="528.50" y1="157.5" x2="528.50" y2="159.5" stroke="#a8a8a8" stroke-width="0.6"/>
<line x1="362" y1="163.00" x2="364.6" y2="163.00" stroke="#999" stroke-width="0.5"/>
<line x1="362" y1="169.80" x2="363.2" y2="169.80" stroke="#999" stroke-width="0.5"/>
<line x1="362" y1="176.60" x2="363.2" y2="176.60" stroke="#999" stroke-width="0.5"/>
<line x1="362" y1="183.40" x2="363.2" y2="183.40" stroke="#999" stroke-width="0.5"/>
<line x1="362" y1="190.20" x2="363.2" y2="190.20" stroke="#999" stroke-width="0.5"/>
<line x1="362" y1="197.00" x2="364.6" y2="197.00" stroke="#999" stroke-width="0.5"/>
<line x1="362" y1="203.80" x2="363.2" y2="203.80" stroke="#999" stroke-width="0.5"/>
<line x1="362" y1="210.60" x2="363.2" y2="210.60" stroke="#999" stroke-width="0.5"/>
<line x1="362" y1="217.40" x2="363.2" y2="217.40" stroke="#999" stroke-width="0.5"/>
<line x1="362" y1="224.20" x2="363.2" y2="224.20" stroke="#999" stroke-width="0.5"/>
<line x1="362" y1="231.00" x2="364.6" y2="231.00" stroke="#999" stroke-width="0.5"/>
<line x1="362" y1="237.80" x2="363.2" y2="237.80" stroke="#999" stroke-width="0.5"/>
<line x1="362" y1="244.60" x2="363.2" y2="244.60" stroke="#999" stroke-width="0.5"/>
<line x1="362" y1="251.40" x2="363.2" y2="251.40" stroke="#999" stroke-width="0.5"/>
<line x1="362" y1="258.20" x2="363.2" y2="258.20" stroke="#999" stroke-width="0.5"/>
<line x1="362" y1="265.00" x2="364.6" y2="265.00" stroke="#999" stroke-width="0.5"/>
<line x1="362" y1="271.80" x2="363.2" y2="271.80" stroke="#999" stroke-width="0.5"/>
<line x1="362" y1="278.60" x2="363.2" y2="278.60" stroke="#999" stroke-width="0.5"/>
<line x1="362" y1="285.40" x2="363.2" y2="285.40" stroke="#999" stroke-width="0.5"/>
<line x1="362" y1="292.20" x2="363.2" y2="292.20" stroke="#999" stroke-width="0.5"/>
<rect x="362" y="172.9" width="170" height="4.2" fill="#0a10c8"/>
<rect x="362" y="173.9" width="170" height="2.2" fill="#38e0b0"/>
<rect x="362" y="174.6" width="170" height="0.9" fill="#60f080"/>
<rect x="362" y="179" width="170" height="6" fill="#0a10c8"/>
<rect x="362" y="179.9" width="170" height="3.7" fill="#f4ee10"/>
<rect x="362" y="181.3" width="170" height="0.8" fill="#f8c010"/>
<ellipse cx="494" cy="170" rx="3.2" ry="1.1" fill="#1030e0"/>
<rect x="362" y="276.3" width="170" height="3" fill="#1020d0"/>
<rect x="362" y="276.6" width="170" height="0.7" fill="#f0e020"/>
<rect x="362" y="277.1" width="170" height="1.1" fill="#f87010"/>
<rect x="362" y="278.2" width="170" height="0.5" fill="#60d0e0"/>
<path d="M525.5,152.5L528.9000000000001,155.89999999999998M528.9000000000001,152.5L525.5,155.89999999999998" stroke="#e8e8e8" stroke-width="0.7" fill="none"/>
<path d="M521.5999999999999,160.2L531.3,160.2L531.3,169.79999999999998Z" fill="#9a9a9a"/>
<circle cx="529.0" cy="162.6" r="1.1" fill="none" stroke="#e0e0e0" stroke-width="0.5"/><path d="M528.1999999999999,163.5L526.3,165.6" stroke="#e0e0e0" stroke-width="0.6"/>
</svg>
<div class="t" style="left:365.60px;top:267.10px;font-size:3.8px;color:#fff;font-weight:normal;">Eye: All</div>
<div class="t" style="left:365.60px;top:272.40px;font-size:3.8px;color:#fff;font-weight:normal;">Offset: 0</div>
<div class="t" style="left:365.60px;top:279.00px;font-size:3.8px;color:#fff;font-weight:normal;">UIs: 4021</div>
<svg class="a" style="left:0;top:0" width="600" height="600" viewBox="0 0 600 600">
<defs><linearGradient id="bg" x1="0" x2="1" y1="0" y2="0"><stop offset="0" stop-color="#d6ce20"/><stop offset="0.14" stop-color="#b6ae18"/><stop offset="0.5" stop-color="#b0a818"/><stop offset="0.86" stop-color="#b6ae18"/><stop offset="1" stop-color="#cec620"/></linearGradient></defs>
<line x1="362" y1="386" x2="532.5" y2="386" stroke="#5a5a5a" stroke-width="0.7" stroke-dasharray="0.7 2.57"/>
<line x1="362" y1="399.6" x2="532.5" y2="399.6" stroke="#5a5a5a" stroke-width="0.7" stroke-dasharray="0.7 2.57"/>
<line x1="362" y1="413.2" x2="532.5" y2="413.2" stroke="#c8c8c8" stroke-width="0.7" stroke-dasharray="0.7 2.57"/>
<rect x="365.70" y="319" width="7.90" height="104.5" fill="url(#bg)"/>
<rect x="365.70" y="307.5" width="4.4" height="12" fill="#6e6a10"/>
<rect x="366.10" y="313.2" width="3.6" height="1.4" fill="#a8a018"/>
<rect x="365.70" y="318.8" width="7.90" height="3" rx="1" fill="#f0e81c"/>
<rect x="382.00" y="319" width="7.90" height="104.5" fill="url(#bg)"/>
<rect x="398.30" y="319" width="7.90" height="104.5" fill="url(#bg)"/>
<rect x="414.60" y="319" width="7.90" height="104.5" fill="url(#bg)"/>
<rect x="430.90" y="319" width="7.90" height="104.5" fill="url(#bg)"/>
<rect x="447.20" y="319" width="7.90" height="104.5" fill="url(#bg)"/>
<rect x="463.50" y="319" width="7.90" height="104.5" fill="url(#bg)"/>
<rect x="479.80" y="319" width="7.90" height="104.5" fill="url(#bg)"/>
<rect x="496.10" y="319" width="7.90" height="104.5" fill="url(#bg)"/>
<rect x="512.40" y="319" width="7.90" height="104.5" fill="url(#bg)"/>
<rect x="528.70" y="319" width="3.80" height="104.5" fill="url(#bg)"/>
<path d="M362,423.6L364.20,424.3L366.70,422.6L372.70,422.8L375.20,424.3L380.50,424.3L383.00,422.6L389.00,422.8L391.50,424.3L396.80,424.3L399.30,422.6L405.30,422.8L407.80,424.3L413.10,424.3L415.60,422.6L421.60,422.8L424.10,424.3L429.40,424.3L431.90,422.6L437.90,422.8L440.40,424.3L445.70,424.3L448.20,422.6L454.20,422.8L456.70,424.3L462.00,424.3L464.50,422.6L470.50,422.8L473.00,424.3L478.30,424.3L480.80,422.6L486.80,422.8L489.30,424.3L494.60,424.3L497.10,422.6L503.10,422.8L505.60,424.3L510.90,424.3L513.40,422.6L519.40,422.8L521.90,424.3L527.20,424.3L529.70,422.6L535.70,422.8L538.20,424.3L532.5,424" stroke="#f2ea20" stroke-width="1.7" fill="none" stroke-linejoin="round"/>
<path d="M362,410.3L369.6,410.3L372.3,413.2L369.6,416.1L362,416.1Z" fill="#f0e43a"/>
<path d="M353.6,294.90000000000003L357.0,298.3M357.0,294.90000000000003L353.6,298.3" stroke="#e8e8e8" stroke-width="0.7" fill="none"/>
</svg>
<div class="t" style="left:364.00px;top:411.33px;font-size:3.4px;color:#333;font-weight:bold;">C1</div>
<div class="t" style="left:279.30px;width:200px;text-align:center;top:427.91px;font-size:3.6px;color:#f0f0f0;font-weight:normal;">-40 ms</div>
<div class="t" style="left:296.05px;width:200px;text-align:center;top:427.91px;font-size:3.6px;color:#f0f0f0;font-weight:normal;">-30 ms</div>
<div class="t" style="left:312.80px;width:200px;text-align:center;top:427.91px;font-size:3.6px;color:#f0f0f0;font-weight:normal;">-20 ms</div>
<div class="t" style="left:329.55px;width:200px;text-align:center;top:427.91px;font-size:3.6px;color:#f0f0f0;font-weight:normal;">-10 ms</div>
<div class="t" style="left:346.30px;width:200px;text-align:center;top:427.91px;font-size:3.6px;color:#f0f0f0;font-weight:normal;">0 s</div>
<div class="t" style="left:363.05px;width:200px;text-align:center;top:427.91px;font-size:3.6px;color:#f0f0f0;font-weight:normal;">10 ms</div>
<div class="t" style="left:379.80px;width:200px;text-align:center;top:427.91px;font-size:3.6px;color:#f0f0f0;font-weight:normal;">20 ms</div>
<div class="t" style="left:396.55px;width:200px;text-align:center;top:427.91px;font-size:3.6px;color:#f0f0f0;font-weight:normal;">30 ms</div>
<div class="t" style="left:413.30px;width:200px;text-align:center;top:427.91px;font-size:3.6px;color:#f0f0f0;font-weight:normal;">40 ms</div>
<div class="t" style="right:68.50px;top:383.91px;font-size:3.6px;color:#e8e060;font-weight:normal;">400 mV</div>
<div class="t" style="right:68.50px;top:397.51px;font-size:3.6px;color:#e8e060;font-weight:normal;">200 mV</div>
<div class="t" style="right:68.50px;top:411.11px;font-size:3.6px;color:#e8e060;font-weight:normal;">0 V</div>
<div class="a" style="left:381.00px;top:170.40px;width:150.30px;height:208.20px;background:#c4c4c4;"></div>
<div class="a" style="left:381.00px;top:170.40px;width:150.30px;height:12.60px;background:#6b6b6b;"></div>
<div class="t" style="left:384.40px;top:173.79px;font-size:4.5px;color:#f6f6f6;font-weight:normal;">ADD MEASUREMENTS</div>
<div class="a" style="left:381.00px;top:182.80px;width:150.30px;height:11.60px;background:linear-gradient(90deg,#9292ba 0px,#9292ba 19.5px,#aaaa92 20.5px,#aaaa92 25.5px,#9a9ac0 26.5px,#9a9ac0 40px,#b4b4b4 42px,#b4b4b4 87px,#a0a0c8 89px,#a0a0c8 103.5px,#b6b694 104.5px,#b6b694 112.5px,#a0a0c8 113.5px,#a0a0c8 125px,#b9b9b9 127px,#bcbcbc 151px);"></div>
<div class="a" style="left:381.00px;top:182.70px;width:150.30px;height:0.70px;background:#a4aca0;"></div>
<div class="a" style="left:381.00px;top:193.90px;width:150.30px;height:0.80px;background:#d4d4d4;"></div>
<div class="t" style="left:385.20px;top:187.29px;font-size:4.5px;color:#f0f0f6;font-weight:normal;">Standard</div>
<div class="a" style="left:409.50px;top:186.80px;width:27.50px;height:8.00px;background:#d2d2d2;border-radius:1.5px 1.5px 0 0;"></div>
<div class="t" style="left:323.30px;width:200px;text-align:center;top:187.69px;font-size:4.5px;color:#0a0a0a;font-weight:normal;">Jitter</div>
<div class="a" style="left:381.00px;top:194.50px;width:150.30px;height:83.20px;background:#c7c7c7;"></div>
<div class="a" style="left:384.20px;top:197.00px;width:144.20px;height:58.80px;background:#a3a3a3;border-radius:2.5px;border:0.5px solid #8c8c8c;"></div>
<div class="a" style="left:386.00px;top:199.00px;width:22.00px;height:17.00px;background:#9b9b9b;border:0.8px solid #cdcdcd;"></div>
<div class="a" style="left:410.20px;top:199.00px;width:22.00px;height:17.00px;background:#9b9b9b;border:0.8px solid #cdcdcd;"></div>
<div class="a" style="left:434.30px;top:199.00px;width:22.00px;height:17.00px;background:#9b9b9b;border:0.8px solid #cdcdcd;"></div>
<div class="a" style="left:386.00px;top:218.30px;width:22.00px;height:17.00px;background:#9b9b9b;border:0.8px solid #cdcdcd;"></div>
<div class="a" style="left:410.20px;top:218.30px;width:22.00px;height:17.00px;background:#9b9b9b;border:0.8px solid #cdcdcd;"></div>
<div class="a" style="left:434.30px;top:218.30px;width:22.00px;height:17.00px;background:#9b9b9b;border:0.8px solid #cdcdcd;"></div>
<div class="a" style="left:386.00px;top:237.40px;width:22.00px;height:17.00px;background:#9b9b9b;border:0.8px solid #cdcdcd;"></div>
<div class="a" style="left:410.20px;top:237.40px;width:22.00px;height:17.00px;background:#9b9b9b;border:0.8px solid #cdcdcd;"></div>
<div class="a" style="left:434.30px;top:237.40px;width:22.00px;height:17.00px;background:#9b9b9b;border:0.8px solid #cdcdcd;"></div>
<svg class="a" style="left:0;top:0" width="600" height="600" viewBox="0 0 600 600">
<path d="M388.6,213L388.6,202.3L404.3,202.3L404.3,213M400.6,202.3L400.6,212.5L403,212.5" stroke="#c8bc40" stroke-width="0.4" fill="none" opacity="0.85"/>
<path d="M405.00,202.40L406.50,202.40" stroke="#f0e22a" stroke-width="0.4"/>
<path d="M413.20,202.00C416.98,203.88 418.60,207.62 418.60,214.50M429.20,202.00C425.42,203.88 423.80,207.62 423.80,214.50" stroke="#d8cc30" stroke-width="0.5" fill="none"/>
<path d="M418.20,200.90L425.20,200.90" stroke="#222" stroke-width="0.6"/>
<path d="M411.70,211.30L415.20,211.30" stroke="#222" stroke-width="0.6"/>
<path d="M416.20,211.30L418.20,211.30" stroke="#222" stroke-width="0.6"/>
<path d="M424.20,211.30L426.20,211.30" stroke="#222" stroke-width="0.6"/>
<path d="M427.70,211.30L429.70,211.30" stroke="#222" stroke-width="0.6"/>
<path d="M437.10,200.70L442.50,206.90M442.50,200.70L437.10,206.90" stroke="#f0e22a" stroke-width="1.25" fill="none"/>
<path d="M448.10,200.70L453.50,206.90M453.50,200.70L448.10,206.90" stroke="#f0e22a" stroke-width="1.25" fill="none"/>
<path d="M435.50,200.50L455.10,200.50" stroke="#f0e22a" stroke-width="0.7"/>
<path d="M435.50,207.10L455.10,207.10" stroke="#f0e22a" stroke-width="0.7"/>
<path d="M442.80,202.60L447.80,202.60" stroke="#333" stroke-width="0.4"/>
<path d="M442.80,205.20L447.80,205.20" stroke="#333" stroke-width="0.4"/>
<path d="M440.30,208.80C442.26,209.67 443.10,211.41 443.10,214.60M450.30,208.80C448.34,209.67 447.50,211.41 447.50,214.60" stroke="#d8cc30" stroke-width="0.45" fill="none"/>
<path d="M388.90,220.50L395.10,233.10M395.10,220.50L388.90,233.10" stroke="#f0e22a" stroke-width="1.5" fill="none"/>
<path d="M398.90,220.50L405.10,233.10M405.10,220.50L398.90,233.10" stroke="#f0e22a" stroke-width="1.5" fill="none"/>
<path d="M388.00,220.50L406.00,220.50" stroke="#f0e22a" stroke-width="0.8"/>
<path d="M388.00,233.10L406.00,233.10" stroke="#f0e22a" stroke-width="0.8"/>
<path d="M397,222.3L397,231.3" stroke="#333" stroke-width="0.4"/>
<path d="M413.20,221.70C417.05,223.53 418.70,227.19 418.70,233.90M429.20,221.70C425.35,223.53 423.70,227.19 423.70,233.90" stroke="#d8cc30" stroke-width="0.5" fill="none"/>
<path d="M418.8,219.5L418.8,221.70000000000002" stroke="#222" stroke-width="0.6"/>
<path d="M419.40,220.50L421.70,220.50" stroke="#222" stroke-width="0.5"/>
<path d="M436.30,221.90C440.36,223.70 442.10,227.30 442.10,233.90M454.30,221.90C450.24,223.70 448.50,227.30 448.50,233.90" stroke="#d8cc30" stroke-width="0.5" fill="none"/>
<path d="M437.30,220.50L453.30,220.50" stroke="#222" stroke-width="0.5"/>
<path d="M389.00,239.20L394.60,244.80M394.60,239.20L389.00,244.80" stroke="#f0e22a" stroke-width="1.25" fill="none"/>
<path d="M399.00,239.20L404.60,244.80M404.60,239.20L399.00,244.80" stroke="#f0e22a" stroke-width="1.25" fill="none"/>
<path d="M387.50,238.90L406.50,238.90" stroke="#f0e22a" stroke-width="0.7"/>
<path d="M387.50,245.20L406.50,245.20" stroke="#f0e22a" stroke-width="0.7"/>
<path d="M389.6,246.8L389.6,250.4Q391.4,253.6 393.2,250.4L393.2,246.8" stroke="#e8dc30" stroke-width="0.5" fill="none"/>
<ellipse cx="391.4" cy="251.6" rx="1.2" ry="1" fill="#f0e22a"/>
<path d="M413.10,239.00L417.30,243.60M417.30,239.00L413.10,243.60" stroke="#f0e22a" stroke-width="0.75" fill="none"/>
<path d="M419.10,239.00L423.30,243.60M423.30,239.00L419.10,243.60" stroke="#f0e22a" stroke-width="0.75" fill="none"/>
<path d="M425.10,239.00L429.30,243.60M429.30,239.00L425.10,243.60" stroke="#f0e22a" stroke-width="0.75" fill="none"/>
<path d="M412.00,238.90L430.40,238.90" stroke="#f0e22a" stroke-width="0.8"/>
<path d="M412.00,243.70L430.40,243.70" stroke="#f0e22a" stroke-width="0.8"/>
<path d="M412.00,245.80L430.40,245.80" stroke="#f0e22a" stroke-width="0.6"/>
<path d="M412.2,250.0L414.7,250.0Q415.4,247.0 416.4,247.0Q417.4,247.0 418.2,250.0L430.2,250.0" stroke="#f0e22a" stroke-width="0.55" fill="none"/>
<path d="M412.00,252.60L430.40,252.60" stroke="#f0e22a" stroke-width="0.8"/>
<path d="M414.5,246.70000000000002L418.4,246.70000000000002" stroke="#222" stroke-width="0.7"/>
<path d="M437.60,239.00L442.00,243.80M442.00,239.00L437.60,243.80" stroke="#f0e22a" stroke-width="0.8" fill="none"/>
<path d="M447.10,239.00L451.50,243.80M451.50,239.00L447.10,243.80" stroke="#f0e22a" stroke-width="0.8" fill="none"/>
<path d="M436.10,238.90L454.50,238.90" stroke="#f0e22a" stroke-width="0.8"/>
<path d="M436.10,243.80L454.50,243.80" stroke="#f0e22a" stroke-width="0.8"/>
<path d="M436.10,245.90L454.50,245.90" stroke="#f0e22a" stroke-width="0.5"/>
<path d="M439.5,246.6L439.5,252.4" stroke="#f0e22a" stroke-width="0.8"/>
<path d="M436.10,252.60L454.50,252.60" stroke="#f0e22a" stroke-width="0.8"/>
<path d="M437.50,247.80L443.30,247.80" stroke="#222" stroke-width="0.6"/>
<circle cx="522.2" cy="176.2" r="3.7" fill="none" stroke="#f0f0f0" stroke-width="0.8"/>
</svg>
<div class="t" style="left:422.20px;width:200px;text-align:center;top:173.38px;font-size:5.2px;color:#f4f4f4;font-weight:bold;">?</div>
<div class="t" style="left:459.20px;top:197.69px;font-size:4.5px;color:#0a0a0a;font-weight:normal;">Jitter Summary</div>
<div class="t" style="left:459.20px;top:205.69px;font-size:4.5px;color:#0a0a0a;font-weight:normal;">Jitter Summary is a group</div>
<div class="t" style="left:459.20px;top:211.11px;font-size:4.5px;color:#0a0a0a;font-weight:normal;">consisting of the following</div>
<div class="t" style="left:459.20px;top:216.53px;font-size:4.5px;color:#0a0a0a;font-weight:normal;">measurements: TIE, TJ@BER, Eye</div>
<div class="t" style="left:459.20px;top:221.95px;font-size:4.5px;color:#0a0a0a;font-weight:normal;">Width@BER, RJ-δδ, DJ-δδ, PJ,</div>
<div class="t" style="left:459.20px;top:227.37px;font-size:4.5px;color:#0a0a0a;font-weight:normal;">DDJ, DCD</div>
<div class="t" style="left:384.60px;top:256.99px;font-size:4.5px;color:#0a0a0a;font-weight:normal;">Source</div>
<div class="a" style="left:384.20px;top:263.00px;width:35.00px;height:11.40px;background:#d6dde6;border:0.7px solid #8eb4d8;border-radius:1px;"></div>
<div class="t" style="left:386.30px;top:266.19px;font-size:4.5px;color:#0a0a0a;font-weight:normal;">Ch 1</div>
<svg class="a" style="left:0;top:0" width="600" height="600" viewBox="0 0 600 600"><path d="M412.8,268.2L414.1,269.8L415.4,268.2" stroke="#666" stroke-width="0.6" fill="none"/></svg>
<div class="a" style="left:506.20px;top:263.60px;width:21.40px;height:10.40px;background:linear-gradient(#e4e4e4,#c9c9c9);border:0.6px solid #9a9a9a;border-radius:1.6px;"></div>
<div class="t" style="left:416.90px;width:200px;text-align:center;top:266.29px;font-size:4.5px;color:#0a0a0a;font-weight:normal;">Add</div>
<div class="a" style="left:381.00px;top:277.60px;width:150.30px;height:12.60px;background:linear-gradient(#f6f6f6,#e6e6e6);"></div>
<div class="t" style="left:384.40px;top:281.64px;font-size:3.9px;color:#0a0a0a;font-weight:normal;">JITTER MEASUREMENTS</div>
<div class="a" style="left:381.00px;top:290.20px;width:150.30px;height:51.70px;background:#d3d3d3;"></div>
<div class="a" style="left:384.20px;top:290.80px;width:48.50px;height:11.70px;background:#dadada;border:0.5px solid #b4b4b4;border-radius:1.5px;"></div>
<div class="a" style="left:528.00px;top:291.00px;width:1.20px;height:31.00px;background:#f4f4f4;"></div>
<div class="a" style="left:385.50px;top:291.40px;width:10.00px;height:10.60px;background:linear-gradient(#dedede,#cbcbcb);border:0.5px solid #a6a6a6;border-radius:1.6px;"></div>
<div class="t" style="left:398.30px;top:294.19px;font-size:4.5px;color:#0a0a0a;font-weight:normal;">Jitter Summary</div>
<div class="a" style="left:434.30px;top:291.40px;width:10.00px;height:10.60px;background:linear-gradient(#dedede,#cbcbcb);border:0.5px solid #a6a6a6;border-radius:1.6px;"></div>
<div class="t" style="left:447.10px;top:294.19px;font-size:4.5px;color:#0a0a0a;font-weight:normal;">TIE</div>
<div class="a" style="left:482.50px;top:291.40px;width:10.00px;height:10.60px;background:linear-gradient(#dedede,#cbcbcb);border:0.5px solid #a6a6a6;border-radius:1.6px;"></div>
<div class="t" style="left:495.30px;top:294.19px;font-size:4.5px;color:#0a0a0a;font-weight:normal;">Phase Noise</div>
<div class="a" style="left:385.50px;top:304.03px;width:10.00px;height:10.60px;background:linear-gradient(#dedede,#cbcbcb);border:0.5px solid #a6a6a6;border-radius:1.6px;"></div>
<div class="t" style="left:398.30px;top:306.82px;font-size:4.5px;color:#0a0a0a;font-weight:normal;">TJ@BER</div>
<div class="a" style="left:434.30px;top:304.03px;width:10.00px;height:10.60px;background:linear-gradient(#dedede,#cbcbcb);border:0.5px solid #a6a6a6;border-radius:1.6px;"></div>
<div class="t" style="left:447.10px;top:306.82px;font-size:4.5px;color:#0a0a0a;font-weight:normal;">RJ-δδ</div>
<div class="a" style="left:482.50px;top:304.03px;width:10.00px;height:10.60px;background:linear-gradient(#dedede,#cbcbcb);border:0.5px solid #a6a6a6;border-radius:1.6px;"></div>
<div class="t" style="left:495.30px;top:306.82px;font-size:4.5px;color:#0a0a0a;font-weight:normal;">DJ-δδ</div>
<div class="a" style="left:385.50px;top:316.66px;width:10.00px;height:10.60px;background:linear-gradient(#dedede,#cbcbcb);border:0.5px solid #a6a6a6;border-radius:1.6px;"></div>
<div class="t" style="left:398.30px;top:319.45px;font-size:4.5px;color:#0a0a0a;font-weight:normal;">PJ</div>
<div class="a" style="left:434.30px;top:316.66px;width:10.00px;height:10.60px;background:linear-gradient(#dedede,#cbcbcb);border:0.5px solid #a6a6a6;border-radius:1.6px;"></div>
<div class="t" style="left:447.10px;top:319.45px;font-size:4.5px;color:#0a0a0a;font-weight:normal;">RJ</div>
<div class="a" style="left:482.50px;top:316.66px;width:10.00px;height:10.60px;background:linear-gradient(#dedede,#cbcbcb);border:0.5px solid #a6a6a6;border-radius:1.6px;"></div>
<div class="t" style="left:495.30px;top:319.45px;font-size:4.5px;color:#0a0a0a;font-weight:normal;">DJ</div>
<div class="a" style="left:385.50px;top:329.29px;width:10.00px;height:10.60px;background:linear-gradient(#dedede,#cbcbcb);border:0.5px solid #a6a6a6;border-radius:1.6px;"></div>
<div class="t" style="left:398.30px;top:332.08px;font-size:4.5px;color:#0a0a0a;font-weight:normal;">DDJ</div>
<div class="a" style="left:434.30px;top:329.29px;width:10.00px;height:10.60px;background:linear-gradient(#dedede,#cbcbcb);border:0.5px solid #a6a6a6;border-radius:1.6px;"></div>
<div class="t" style="left:447.10px;top:332.08px;font-size:4.5px;color:#0a0a0a;font-weight:normal;">DCD</div>
<div class="a" style="left:482.50px;top:329.29px;width:10.00px;height:10.60px;background:linear-gradient(#dedede,#cbcbcb);border:0.5px solid #a6a6a6;border-radius:1.6px;"></div>
<div class="t" style="left:495.30px;top:332.08px;font-size:4.5px;color:#0a0a0a;font-weight:normal;">SRJ</div>
<svg class="a" style="left:0;top:0" width="600" height="600" viewBox="0 0 600 600">
<path d="M387.7,299.5L387.7,294.7L389.5,294.7L390.1,293.7L393.3,293.7L393.3,299.5Z" fill="none" stroke="#26268c" stroke-width="0.6"/>
<path d="M389.2,298.2L389.2,296.09999999999997L390.5,296.09999999999997L390.5,298.2M390.5,296.9L391.8,296.9L391.8,298.2" fill="none" stroke="#26268c" stroke-width="0.5"/>
<path d="M436.7,295.5L441.1,299.7M441.1,295.5L436.7,299.7" fill="none" stroke="#26268c" stroke-width="0.65"/>
<circle cx="441.6" cy="294.09999999999997" r="0.7" fill="#26268c"/>
<path d="M484.9,293.7Q485.9,299.09999999999997 490.5,299.5" fill="none" stroke="#26268c" stroke-width="0.7"/>
<path d="M387.5,309.53L387.5,311.72999999999996M388.7,308.53Q389.7,314.33 390.8,308.83M392.1,311.93L392.1,308.13M393.3,306.33L393.3,311.93" fill="none" stroke="#4a4ab0" stroke-width="0.6"/>
<path d="M436.7,308.13L441.1,312.33M441.1,308.13L436.7,312.33" fill="none" stroke="#26268c" stroke-width="0.65"/>
<path d="M437.3,306.43L441.7,306.43" stroke="#26268c" stroke-width="0.7"/>
<circle cx="440.5" cy="307.63" r="0.6" fill="#26268c"/>
<path d="M484.9,308.13L489.3,312.33M489.3,308.13L484.9,312.33" fill="none" stroke="#26268c" stroke-width="0.65"/>
<path d="M485.5,306.43L489.9,306.43" stroke="#26268c" stroke-width="0.7"/>
<circle cx="488.7" cy="307.63" r="0.6" fill="#26268c"/>
<path d="M387.9,320.76L392.3,324.96M392.3,320.76L387.9,324.96" fill="none" stroke="#26268c" stroke-width="0.65"/>
<circle cx="392.8" cy="319.35999999999996" r="0.7" fill="#26268c"/>
<path d="M436.7,320.76L441.1,324.96M441.1,320.76L436.7,324.96" fill="none" stroke="#26268c" stroke-width="0.65"/>
<circle cx="441.6" cy="319.35999999999996" r="0.7" fill="#26268c"/>
<path d="M484.9,320.76L489.3,324.96M489.3,320.76L484.9,324.96" fill="none" stroke="#26268c" stroke-width="0.65"/>
<circle cx="489.8" cy="319.35999999999996" r="0.7" fill="#26268c"/>
<path d="M387.9,333.39L392.3,337.59M392.3,333.39L387.9,337.59" fill="none" stroke="#26268c" stroke-width="0.65"/>
<path d="M388.5,331.69L392.9,331.69" stroke="#26268c" stroke-width="0.7"/>
<circle cx="391.7" cy="332.89" r="0.6" fill="#26268c"/>
<path d="M436.7,333.39L441.1,337.59M441.1,333.39L436.7,337.59" fill="none" stroke="#26268c" stroke-width="0.65"/>
<path d="M437.3,331.69L441.7,331.69" stroke="#26268c" stroke-width="0.7"/>
<circle cx="440.5" cy="332.89" r="0.6" fill="#26268c"/>
<path d="M484.9,337.39L486.1,333.78999999999996L487.3,337.39M489.3,337.39L489.3,333.59M486.9,331.78999999999996L490.1,331.78999999999996" fill="none" stroke="#4a4ab0" stroke-width="0.6"/>
</svg>
<div class="a" style="left:381.00px;top:341.90px;width:150.30px;height:11.40px;background:linear-gradient(#f7f7f7,#e2e2e2);border-top:0.6px solid #b8b8b8;"></div>
<div class="t" style="left:384.40px;top:345.24px;font-size:3.9px;color:#0a0a0a;font-weight:normal;">EYE MEASUREMENTS</div>
<svg class="a" style="left:0;top:0" width="600" height="600" viewBox="0 0 600 600"><path d="M524.3,345.50L526.3,347.60L524.3,349.70" stroke="#222" stroke-width="0.9" fill="none"/></svg>
<div class="a" style="left:381.00px;top:353.90px;width:150.30px;height:11.80px;background:linear-gradient(#f7f7f7,#e2e2e2);border-top:0.6px solid #b8b8b8;"></div>
<div class="t" style="left:384.40px;top:357.44px;font-size:3.9px;color:#0a0a0a;font-weight:normal;">AMPLITUDE MEASUREMENTS</div>
<svg class="a" style="left:0;top:0" width="600" height="600" viewBox="0 0 600 600"><path d="M524.3,357.70L526.3,359.80L524.3,361.90" stroke="#222" stroke-width="0.9" fill="none"/></svg>
<div class="a" style="left:381.00px;top:366.30px;width:150.30px;height:11.90px;background:linear-gradient(#f7f7f7,#e2e2e2);border-top:0.6px solid #b8b8b8;"></div>
<div class="t" style="left:384.40px;top:369.89px;font-size:3.9px;color:#0a0a0a;font-weight:normal;">TIMING MEASUREMENTS</div>
<svg class="a" style="left:0;top:0" width="600" height="600" viewBox="0 0 600 600"><path d="M524.3,370.15L526.3,372.25L524.3,374.35" stroke="#222" stroke-width="0.9" fill="none"/></svg>
<div class="a" style="left:381.00px;top:378.10px;width:150.30px;height:0.60px;background:#9a9a9a;"></div>
<div class="a" style="left:533.00px;top:150.00px;width:49.00px;height:283.60px;background:#2e2e2e;"></div>
<div class="a" style="left:532.90px;top:150.00px;width:0.90px;height:283.60px;background:#858585;"></div>
<div class="a" style="left:537.20px;top:149.20px;width:44.00px;height:284.40px;background:#414141;border:0.7px solid #6c6c6c;border-right:none;border-radius:2px 0 0 2px;"></div>
<div class="t" style="left:459.60px;width:200px;text-align:center;top:150.03px;font-size:4.6px;color:#f4f4f4;font-weight:bold;">Add New...</div>
<div class="a" style="left:539.60px;top:157.60px;width:18.80px;height:10.60px;background:#383838;border:0.7px solid #6a6a6a;border-radius:2px;"></div>
<div class="t" style="left:449.00px;width:200px;text-align:center;top:160.68px;font-size:4.0px;color:#f4f4f4;font-weight:bold;">Cursors</div>
<div class="a" style="left:560.60px;top:157.60px;width:18.80px;height:10.60px;background:#383838;border:0.7px solid #6a6a6a;border-radius:2px;"></div>
<div class="t" style="left:470.00px;width:200px;text-align:center;top:160.39px;font-size:4.5px;color:#f4f4f4;font-weight:bold;">Note</div>
<div class="a" style="left:539.60px;top:170.90px;width:18.80px;height:10.60px;background:#383838;border:0.7px solid #6a6a6a;border-radius:2px;"></div>
<div class="t" style="left:449.00px;width:200px;text-align:center;top:173.81px;font-size:4.3px;color:#f4f4f4;font-weight:bold;">Measure</div>
<div class="a" style="left:560.60px;top:170.90px;width:18.80px;height:10.60px;background:#383838;border:0.7px solid #6a6a6a;border-radius:2px;"></div>
<div class="t" style="left:470.00px;width:200px;text-align:center;top:173.69px;font-size:4.5px;color:#f4f4f4;font-weight:bold;">Search</div>
<div class="a" style="left:539.60px;top:184.00px;width:18.80px;height:10.60px;background:#383838;border:0.7px solid #6a6a6a;border-radius:2px;"></div>
<div class="t" style="left:449.00px;width:200px;text-align:center;top:184.51px;font-size:4.3px;color:#f4f4f4;font-weight:bold;">Results</div>
<div class="t" style="left:449.00px;width:200px;text-align:center;top:189.21px;font-size:4.3px;color:#f4f4f4;font-weight:bold;">Table</div>
<div class="a" style="left:560.60px;top:184.00px;width:18.80px;height:10.60px;background:#383838;border:0.7px solid #6a6a6a;border-radius:2px;"></div>
<div class="t" style="left:470.00px;width:200px;text-align:center;top:186.79px;font-size:4.5px;color:#f4f4f4;font-weight:bold;">Plot</div>
<div class="a" style="left:539.00px;top:200.40px;width:42.20px;height:5.60px;background:#000;"></div>
<div class="t" style="left:540.80px;top:200.65px;font-size:4.4px;color:#f2e430;font-weight:bold;">Meas 1</div>
<div class="a" style="left:573.00px;top:201.90px;width:5.80px;height:2.40px;background:#f2e430;border-radius:0.8px;"></div>
<div class="a" style="left:575.70px;top:201.90px;width:0.50px;height:2.40px;background:#000;"></div>
<div class="a" style="left:539.00px;top:206.00px;width:42.20px;height:51.00px;background:#d9d9d9;"></div>
<div class="t" style="left:541.20px;top:207.21px;font-size:4.3px;color:#0a0a0a;font-weight:normal;">Jitter Summary</div>
<div class="t" style="left:541.20px;top:212.81px;font-size:4.3px;color:#0a0a0a;font-weight:normal;">TIE(μ): 35.07 ns</div>
<div class="t" style="left:541.20px;top:218.41px;font-size:4.3px;color:#0a0a0a;font-weight:normal;">TJ@: 485.5 ns</div>
<div class="t" style="left:541.20px;top:224.01px;font-size:4.3px;color:#0a0a0a;font-weight:normal;">EW@: 1.514 μs</div>
<div class="t" style="left:541.20px;top:229.61px;font-size:4.3px;color:#0a0a0a;font-weight:normal;">RJ-δδ: 10.02 ns</div>
<div class="t" style="left:541.20px;top:235.21px;font-size:4.3px;color:#0a0a0a;font-weight:normal;">DJ-δδ: 345.2 ns</div>
<div class="t" style="left:541.20px;top:240.81px;font-size:4.3px;color:#0a0a0a;font-weight:normal;">PJ: 171.9 ns</div>
<div class="t" style="left:541.20px;top:246.41px;font-size:4.3px;color:#0a0a0a;font-weight:normal;">DDJ: 218.2 ns</div>
<div class="t" style="left:541.20px;top:252.01px;font-size:4.3px;color:#0a0a0a;font-weight:normal;">DCD: 9.835 ns</div>
<div class="a" style="left:534.60px;top:287.50px;width:2.00px;height:8.00px;background:#2a2a2a;"></div>
<div class="t" style="left:435.60px;width:200px;text-align:center;top:287.89px;font-size:2.6px;color:#eee;font-weight:normal;">▴</div>
<div class="t" style="left:435.60px;width:200px;text-align:center;top:292.09px;font-size:2.6px;color:#eee;font-weight:normal;">▾</div>
<div class="a" style="left:535.10px;top:290.70px;width:1.00px;height:1.00px;background:#eee;"></div>
<div class="a" style="left:538.00px;top:419.00px;width:43.00px;height:0.70px;background:#555;"></div>
<div class="a" style="left:540.00px;top:421.30px;width:18.40px;height:10.80px;background:#3a3a3a;border:0.7px solid #666;border-radius:2px;"></div>
<svg class="a" style="left:0;top:0" width="600" height="600" viewBox="0 0 600 600">
<rect x="545.3" y="423.3" width="4.6" height="4.6" fill="none" stroke="#aaa" stroke-width="0.4" stroke-dasharray="0.8 0.6"/>
<circle cx="549.6" cy="426.4" r="1.5" fill="#bbb" stroke="#e8e8e8" stroke-width="0.5"/><path d="M550.6,427.5L552.8,430" stroke="#e8e8e8" stroke-width="0.9"/>
<path d="M567.2,423.2L568,430.6Q571,432.4 574.2,430.6L575,423.2Z" fill="#5a5a5a" stroke="#c8c8c8" stroke-width="0.6"/>
<ellipse cx="571.1" cy="423.1" rx="4" ry="1.1" fill="#444" stroke="#d8d8d8" stroke-width="0.6"/>
</svg>
<div class="a" style="left:18.00px;top:433.80px;width:564.00px;height:24.80px;background:linear-gradient(90deg,#505050,#444 160px,#3f3f3f 300px,#3d3d3d);"></div>
<div class="a" style="left:18.00px;top:433.60px;width:515.00px;height:0.60px;background:#777;"></div>
<div class="a" style="left:18.30px;top:434.30px;width:28.00px;height:6.20px;background:#f2e52c;"></div>
<div class="t" style="left:20.40px;top:434.95px;font-size:4.4px;color:#0a0a0a;font-weight:normal;">Ch 1</div>
<div class="a" style="left:18.30px;top:440.50px;width:28.00px;height:17.70px;background:#dcdcdc;"></div>
<div class="t" style="left:20.60px;top:441.91px;font-size:4.3px;color:#0a0a0a;font-weight:normal;">240 mV/div</div>
<div class="t" style="left:20.60px;top:447.36px;font-size:4.3px;color:#0a0a0a;font-weight:normal;">50 Ω</div>
<div class="t" style="left:20.60px;top:452.81px;font-size:4.3px;color:#0a0a0a;font-weight:normal;">50 MHz</div>
<div class="t" style="left:40.20px;top:453.23px;font-size:3.4px;color:#333;font-weight:bold;">ᴮw</div>
<div class="a" style="left:213.00px;top:435.00px;width:10.60px;height:22.40px;background:#343434;border:0.7px solid #626262;border-radius:1.6px;"></div>
<div class="a" style="left:214.40px;top:436.90px;width:7.80px;height:0.90px;background:#22c8c8;"></div>
<div class="t" style="left:118.30px;width:200px;text-align:center;top:443.28px;font-size:5.2px;color:#f2f2f2;font-weight:bold;">2</div>
<div class="a" style="left:226.33px;top:435.00px;width:10.60px;height:22.40px;background:#343434;border:0.7px solid #626262;border-radius:1.6px;"></div>
<div class="a" style="left:227.73px;top:436.90px;width:7.80px;height:0.90px;background:#e04848;"></div>
<div class="t" style="left:131.63px;width:200px;text-align:center;top:443.28px;font-size:5.2px;color:#f2f2f2;font-weight:bold;">3</div>
<div class="a" style="left:239.66px;top:435.00px;width:10.60px;height:22.40px;background:#343434;border:0.7px solid #626262;border-radius:1.6px;"></div>
<div class="a" style="left:241.06px;top:436.90px;width:7.80px;height:0.90px;background:#90c830;"></div>
<div class="t" style="left:144.96px;width:200px;text-align:center;top:443.28px;font-size:5.2px;color:#f2f2f2;font-weight:bold;">4</div>
<div class="a" style="left:252.99px;top:435.00px;width:10.60px;height:22.40px;background:#343434;border:0.7px solid #626262;border-radius:1.6px;"></div>
<div class="a" style="left:254.39px;top:436.90px;width:7.80px;height:0.90px;background:#f09020;"></div>
<div class="t" style="left:158.29px;width:200px;text-align:center;top:443.28px;font-size:5.2px;color:#f2f2f2;font-weight:bold;">5</div>
<div class="a" style="left:266.32px;top:435.00px;width:10.60px;height:22.40px;background:#343434;border:0.7px solid #626262;border-radius:1.6px;"></div>
<div class="a" style="left:267.72px;top:436.90px;width:7.80px;height:0.90px;background:#2838d0;"></div>
<div class="t" style="left:171.62px;width:200px;text-align:center;top:443.28px;font-size:5.2px;color:#f2f2f2;font-weight:bold;">6</div>
<div class="a" style="left:279.65px;top:435.00px;width:10.60px;height:22.40px;background:#343434;border:0.7px solid #626262;border-radius:1.6px;"></div>
<div class="a" style="left:281.05px;top:436.90px;width:7.80px;height:0.90px;background:#d068d0;"></div>
<div class="t" style="left:184.95px;width:200px;text-align:center;top:443.28px;font-size:5.2px;color:#f2f2f2;font-weight:bold;">7</div>
<div class="a" style="left:292.98px;top:435.00px;width:10.60px;height:22.40px;background:#343434;border:0.7px solid #626262;border-radius:1.6px;"></div>
<div class="a" style="left:294.38px;top:436.90px;width:7.80px;height:0.90px;background:#20c080;"></div>
<div class="t" style="left:198.28px;width:200px;text-align:center;top:443.28px;font-size:5.2px;color:#f2f2f2;font-weight:bold;">8</div>
<div class="a" style="left:310.00px;top:435.00px;width:11.20px;height:22.40px;background:#343434;border:0.7px solid #626262;border-radius:1.6px;"></div>
<div class="a" style="left:311.40px;top:436.90px;width:8.40px;height:0.90px;background:#f09020;"></div>
<div class="t" style="left:215.60px;width:200px;text-align:center;top:439.86px;font-size:4.2px;color:#f2f2f2;font-weight:bold;">Add</div>
<div class="t" style="left:215.60px;width:200px;text-align:center;top:444.56px;font-size:4.2px;color:#f2f2f2;font-weight:bold;">New</div>
<div class="t" style="left:215.60px;width:200px;text-align:center;top:449.26px;font-size:4.2px;color:#f2f2f2;font-weight:bold;">Math</div>
<div class="a" style="left:323.20px;top:435.00px;width:11.20px;height:22.40px;background:#343434;border:0.7px solid #626262;border-radius:1.6px;"></div>
<div class="a" style="left:324.60px;top:436.90px;width:8.40px;height:0.90px;background:#cfcfcf;"></div>
<div class="t" style="left:228.80px;width:200px;text-align:center;top:439.86px;font-size:4.2px;color:#f2f2f2;font-weight:bold;">Add</div>
<div class="t" style="left:228.80px;width:200px;text-align:center;top:444.56px;font-size:4.2px;color:#f2f2f2;font-weight:bold;">New</div>
<div class="t" style="left:228.80px;width:200px;text-align:center;top:449.26px;font-size:4.2px;color:#f2f2f2;font-weight:bold;">Ref</div>
<div class="a" style="left:336.40px;top:435.00px;width:11.20px;height:22.40px;background:#343434;border:0.7px solid #626262;border-radius:1.6px;"></div>
<div class="a" style="left:337.80px;top:436.90px;width:8.40px;height:0.90px;background:#d068d0;"></div>
<div class="t" style="left:242.00px;width:200px;text-align:center;top:439.86px;font-size:4.2px;color:#f2f2f2;font-weight:bold;">Add</div>
<div class="t" style="left:242.00px;width:200px;text-align:center;top:444.56px;font-size:4.2px;color:#f2f2f2;font-weight:bold;">New</div>
<div class="t" style="left:242.00px;width:200px;text-align:center;top:449.26px;font-size:4.2px;color:#f2f2f2;font-weight:bold;">Bus</div>
<div class="a" style="left:351.00px;top:435.50px;width:0.70px;height:22.00px;background:#2c2c2c;"></div>
<div class="a" style="left:354.20px;top:435.00px;width:12.00px;height:22.40px;background:#343434;border:0.7px solid #626262;border-radius:1.6px;"></div>
<div class="t" style="left:260.20px;width:200px;text-align:center;top:443.81px;font-size:4.3px;color:#f2f2f2;font-weight:bold;">DVM</div>
<div class="a" style="left:368.60px;top:435.00px;width:12.00px;height:22.40px;background:#343434;border:0.7px solid #626262;border-radius:1.6px;"></div>
<div class="t" style="left:274.60px;width:200px;text-align:center;top:443.81px;font-size:4.3px;color:#f2f2f2;font-weight:bold;">AFG</div>
<div class="a" style="left:387.00px;top:435.00px;width:66.00px;height:5.00px;background:#5c5c5c;"></div>
<div class="t" style="left:388.80px;top:435.11px;font-size:4.3px;color:#f2f2f2;font-weight:bold;">Horizontal</div>
<div class="a" style="left:387.00px;top:440.00px;width:66.00px;height:18.20px;background:#dbdbdb;"></div>
<div class="t" style="left:389.20px;top:441.71px;font-size:4.3px;color:#0a0a0a;font-weight:normal;">10 ms/div</div>
<div class="t" style="left:421.00px;top:441.71px;font-size:4.3px;color:#0a0a0a;font-weight:normal;">100 ms</div>
<div class="t" style="left:389.20px;top:447.16px;font-size:4.3px;color:#0a0a0a;font-weight:normal;">SR: 125 MS/s</div>
<div class="t" style="left:421.00px;top:447.16px;font-size:4.3px;color:#0a0a0a;font-weight:normal;">8 ns/pt</div>
<div class="t" style="left:389.20px;top:452.61px;font-size:4.3px;color:#0a0a0a;font-weight:normal;">RL: 12.5 Mpts</div>
<div class="t" style="left:426.60px;top:452.61px;font-size:4.3px;color:#0a0a0a;font-weight:normal;">50%</div>
<svg class="a" style="left:0;top:0" width="600" height="600" viewBox="0 0 600 600"><path d="M420.4,453.4L424,453.4L422.2,456.6Z" fill="#a87818"/><path d="M421.2,454L423.2,454L422.2,455.7Z" fill="#222"/></svg>
<div class="a" style="left:456.40px;top:435.00px;width:46.20px;height:5.00px;background:#5c5c5c;"></div>
<div class="t" style="left:458.20px;top:435.11px;font-size:4.3px;color:#f2f2f2;font-weight:bold;">Trigger</div>
<div class="a" style="left:456.40px;top:440.00px;width:46.20px;height:18.20px;background:#dbdbdb;"></div>
<div class="a" style="left:458.60px;top:442.00px;width:8.20px;height:4.60px;background:#f2e52c;border:0.5px solid #a8a020;border-radius:1px;"></div>
<div class="t" style="left:362.70px;width:200px;text-align:center;top:442.31px;font-size:3.6px;color:#333;font-weight:bold;">1</div>
<svg class="a" style="left:0;top:0" width="600" height="600" viewBox="0 0 600 600"><path d="M470.4,446.2L473.6,442.6" stroke="#5a6aa0" stroke-width="0.6" fill="none"/></svg>
<div class="t" style="left:477.60px;top:441.91px;font-size:4.3px;color:#0a0a0a;font-weight:normal;">1.6 V</div>
<div class="a" style="left:506.00px;top:435.00px;width:44.60px;height:5.00px;background:#5c5c5c;"></div>
<div class="t" style="left:507.80px;top:435.11px;font-size:4.3px;color:#f2f2f2;font-weight:bold;">Acquisition</div>
<div class="a" style="left:506.00px;top:440.00px;width:44.60px;height:18.20px;background:#dbdbdb;"></div>
<div class="t" style="left:508.00px;top:441.71px;font-size:4.3px;color:#0a0a0a;font-weight:normal;">Auto,</div>
<div class="t" style="left:527.60px;top:441.71px;font-size:4.3px;color:#0a0a0a;font-weight:normal;">Analyze</div>
<div class="t" style="left:508.00px;top:447.16px;font-size:4.3px;color:#0a0a0a;font-weight:normal;">High Res: 16 bits</div>
<div class="t" style="left:508.00px;top:452.61px;font-size:4.3px;color:#0a0a0a;font-weight:normal;">21 Acqs</div>
<div class="a" style="left:552.80px;top:435.20px;width:26.80px;height:10.00px;background:#1fd61f;border-radius:1.6px;border:0.5px solid #48e048;"></div>
<div class="t" style="left:466.20px;width:200px;text-align:center;top:437.92px;font-size:4.1px;color:#f4fff4;font-weight:bold;">Triggered</div>
</div></body></html>
